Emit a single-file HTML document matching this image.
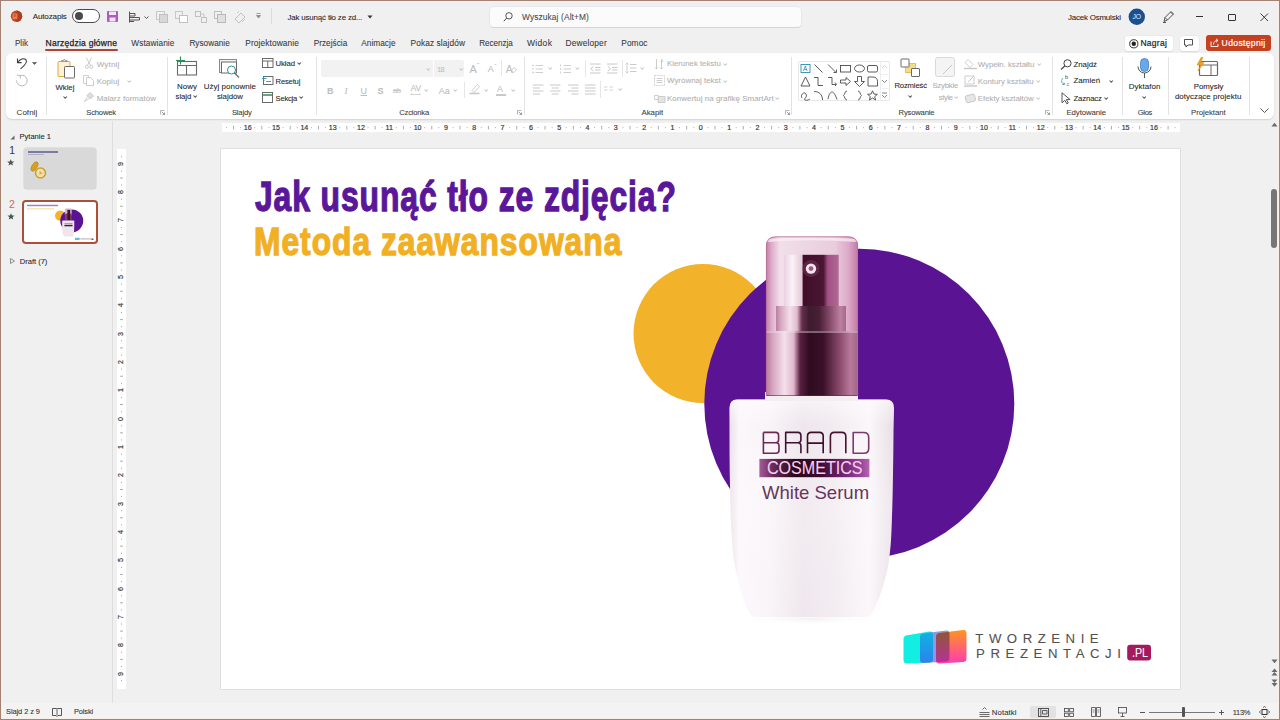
<!DOCTYPE html>
<html><head><meta charset="utf-8">
<style>
*{margin:0;padding:0;box-sizing:border-box}
html,body{width:1280px;height:720px;overflow:hidden}
body{background:#f0f0f0;font-family:"Liberation Sans",sans-serif;color:#262626;position:relative}
.a{position:absolute;white-space:nowrap}
div.a{-webkit-text-stroke:0.08px currentColor}
svg.a{overflow:visible}
</style></head><body>

<svg class="a" style="left:9px;top:9px;" width="15" height="15" viewBox="0 0 15 15" fill="none"><circle cx="7.5" cy="7.3" r="5.7" fill="#c14a28"/><path d="M7.5 1.6A5.7 5.7 0 0 1 7.5 13" fill="#b03c1e"/><rect x="3.6" y="4.6" width="4.8" height="5.4" rx="0.6" fill="#e88a60" opacity="0.85"/><rect x="4.8" y="5.6" width="2.4" height="2" fill="#c14a28" opacity="0.7"/></svg>
<div class="a" style="left:32.70px;top:13.00px;font-size:8.04px;line-height:8.04px;color:#262626;letter-spacing:-0.135px;">Autozapis</div>
<div class="a" style="left:72px;top:9px;width:28px;height:14px;border:1px solid #4a4a4a;border-radius:7px;background:#fff"></div>
<div class="a" style="left:74.5px;top:11.8px;width:8.5px;height:8.5px;border-radius:50%;background:#4a4a4a"></div>
<svg class="a" style="left:106px;top:10px;" width="13" height="13" viewBox="0 0 13 13" fill="none"><rect x="1" y="1" width="11" height="11" rx="1" fill="#b455c8"/><rect x="3" y="1.5" width="7" height="3.5" fill="#f3e6f7"/><rect x="3.5" y="7.5" width="6" height="4" fill="#f3e6f7"/></svg>
<svg class="a" style="left:128px;top:11px;" width="22" height="12" viewBox="0 0 22 12" fill="none"><path d="M1.5 0.5v11M2 2.5h5v2.5H2M2 6.5h9.5v2.5H2M2 10.5h4" stroke="#555" stroke-width="1"/><path d="M16.5 5.5l2 2 2-2" stroke="#555" stroke-width="1"/></svg>
<svg class="a" style="left:156px;top:11px;" width="12" height="12" viewBox="0 0 12 12" fill="none"><rect x="0.5" y="0.5" width="8" height="8" stroke="#c8c8c8"/><rect x="3.5" y="3.5" width="8" height="8" fill="#d8d8d8" stroke="#c0c0c0"/></svg>
<svg class="a" style="left:175px;top:11px;" width="13" height="12" viewBox="0 0 13 12" fill="none"><rect x="0.5" y="0.5" width="7" height="7" stroke="#c8c8c8"/><rect x="4.5" y="4.5" width="8" height="7" fill="#fff" stroke="#c0c0c0"/></svg>
<svg class="a" style="left:195px;top:11px;" width="12" height="12" viewBox="0 0 12 12" fill="none"><rect x="0.5" y="0.5" width="5" height="5" stroke="#c0c0c0"/><rect x="6.5" y="6.5" width="5" height="5" stroke="#c0c0c0"/><path d="M6 3h3v3" stroke="#c8c8c8"/></svg>
<svg class="a" style="left:214px;top:11px;" width="12" height="12" viewBox="0 0 12 12" fill="none"><rect x="0.5" y="0.5" width="7" height="7" stroke="#c0c0c0"/><rect x="3.5" y="3.5" width="8" height="8" fill="#e0e0e0" stroke="#b8b8b8"/></svg>
<svg class="a" style="left:234px;top:11px;" width="12" height="12" viewBox="0 0 12 12" fill="none"><path d="M1 8l6-6 4 4-6 6z" stroke="#c0c0c0"/><path d="M3 2l2-1.5M8 11l3-3" stroke="#c8c8c8"/></svg>
<svg class="a" style="left:256px;top:13px;" width="5" height="6" viewBox="0 0 5 6" fill="none"><path d="M0.5 0.5h4M0.5 2.5h4l-2 2.5z" stroke="#888" fill="#888" stroke-width="0.8"/></svg>
<div class="a" style="left:271px;top:8px;width:1px;height:16px;background:#dcdcdc"></div>
<div class="a" style="left:287.40px;top:14.00px;font-size:7.95px;line-height:7.95px;color:#262626;letter-spacing:-0.167px;">Jak usunąć tło ze zd...</div>
<svg class="a" style="left:367px;top:15px;" width="6" height="4" viewBox="0 0 6 4" fill="none"><path d="M0.5 0.5h5l-2.5 3z" fill="#333"/></svg>
<div class="a" style="left:489.5px;top:6.5px;width:311.5px;height:20.5px;background:#fbfbfb;border-radius:4px;box-shadow:0 0 0 0.6px #e2e2e2,0 1px 0 0 #c9c9c9"></div>
<svg class="a" style="left:503px;top:12px;" width="10" height="10" viewBox="0 0 10 10" fill="none"><circle cx="6" cy="3.8" r="3.2" stroke="#444" stroke-width="0.9"/><path d="M3.6 6.2L0.8 9.2" stroke="#444" stroke-width="1"/></svg>
<div class="a" style="left:522.00px;top:13.00px;font-size:8.36px;line-height:8.36px;color:#4a4a4a;letter-spacing:0.122px;">Wyszukaj (Alt+M)</div>
<div class="a" style="left:1068.00px;top:14.00px;font-size:7.95px;line-height:7.95px;color:#262626;letter-spacing:-0.203px;">Jacek Osmulski</div>
<svg class="a" style="left:1128px;top:8px;" width="18" height="18" viewBox="0 0 18 18" fill="none"><circle cx="8.8" cy="8.7" r="8.2" fill="#1c4f8f"/><text x="8.8" y="11" font-size="6.8" text-anchor="middle" fill="#e8eef8" font-family="Liberation Sans">JO</text></svg>
<svg class="a" style="left:1162px;top:10px;" width="13" height="13" viewBox="0 0 13 13" fill="none"><path d="M2 11.5l1-4 6-6 2.5 2.5-6 6z M3 7.5l2.5 2.5 M8.5 2l2.5 2.5" stroke="#444" stroke-width="0.9" fill="none"/><path d="M1 12.5h3" stroke="#444" stroke-width="0.9"/></svg>
<div class="a" style="left:1195.5px;top:16px;width:7.5px;height:1px;background:#333"></div>
<div class="a" style="left:1228px;top:13.5px;width:7.5px;height:7.5px;border:1px solid #333;border-radius:1px"></div>
<svg class="a" style="left:1259.5px;top:13px;" width="8.5" height="8.5" viewBox="0 0 8.5 8.5" fill="none"><path d="M0.5 0.5l7.5 7.5M8 0.5L0.5 8" stroke="#333" stroke-width="0.95"/></svg>
<div class="a" style="left:15.00px;top:40.00px;font-size:8.14px;line-height:8.14px;color:#3a3a3a;letter-spacing:-0.049px;">Plik</div>
<div class="a" style="left:131.30px;top:39.00px;font-size:8.29px;line-height:8.29px;color:#3a3a3a;letter-spacing:0.077px;">Wstawianie</div>
<div class="a" style="left:189.40px;top:40.00px;font-size:8.22px;line-height:8.22px;color:#3a3a3a;letter-spacing:0.015px;">Rysowanie</div>
<div class="a" style="left:245.30px;top:39.00px;font-size:8.34px;line-height:8.34px;color:#3a3a3a;letter-spacing:0.110px;">Projektowanie</div>
<div class="a" style="left:313.70px;top:40.00px;font-size:8.23px;line-height:8.23px;color:#3a3a3a;letter-spacing:0.023px;">Przejścia</div>
<div class="a" style="left:361.25px;top:40.00px;font-size:8.25px;line-height:8.25px;color:#3a3a3a;letter-spacing:0.043px;">Animacje</div>
<div class="a" style="left:410.50px;top:39.00px;font-size:8.33px;line-height:8.33px;color:#3a3a3a;letter-spacing:0.103px;">Pokaz slajdów</div>
<div class="a" style="left:479.25px;top:40.00px;font-size:8.15px;line-height:8.15px;color:#3a3a3a;letter-spacing:-0.042px;">Recenzja</div>
<div class="a" style="left:527.00px;top:39.00px;font-size:8.51px;line-height:8.51px;color:#3a3a3a;letter-spacing:0.324px;">Widok</div>
<div class="a" style="left:565.50px;top:39.00px;font-size:8.37px;line-height:8.37px;color:#3a3a3a;letter-spacing:0.154px;">Deweloper</div>
<div class="a" style="left:621.25px;top:39.00px;font-size:8.30px;line-height:8.30px;color:#3a3a3a;letter-spacing:0.112px;">Pomoc</div>
<div class="a" style="left:45.50px;top:39.00px;font-size:8.52px;line-height:8.52px;color:#1e1e1e;letter-spacing:0.252px;-webkit-text-stroke:0.25px #1e1e1e;">Narzędzia główne</div>
<div class="a" style="left:45px;top:49px;width:73px;height:2px;background:#a4493a;border-radius:1px"></div>
<div class="a" style="left:1125px;top:35.5px;width:47.5px;height:15px;background:#fff;border-radius:3px;box-shadow:0 0 0 0.5px #e6e6e6,0 0.8px 1.2px rgba(0,0,0,.12)"></div>
<svg class="a" style="left:1128.5px;top:38.5px;" width="10" height="10" viewBox="0 0 10 10" fill="none"><circle cx="4.8" cy="4.8" r="4.1" stroke="#222" stroke-width="0.9"/><circle cx="4.8" cy="4.8" r="2.2" fill="#222"/></svg>
<div class="a" style="left:1140.40px;top:39.00px;font-size:8.51px;line-height:8.51px;color:#1e1e1e;letter-spacing:0.270px;-webkit-text-stroke:0.2px #1e1e1e;">Nagraj</div>
<div class="a" style="left:1179.5px;top:35.5px;width:19px;height:15px;background:#fff;border-radius:3px;box-shadow:0 0 0 0.5px #e6e6e6,0 0.8px 1.2px rgba(0,0,0,.12)"></div>
<svg class="a" style="left:1184px;top:38.5px;" width="9" height="9" viewBox="0 0 9 9" fill="none"><path d="M0.5 0.5h8v5.5h-4.5l-2 2v-2H0.5z" stroke="#333" stroke-width="0.85"/></svg>
<div class="a" style="left:1205.5px;top:35px;width:65.5px;height:15.5px;background:#c4401f;border-radius:3px"></div>
<svg class="a" style="left:1210px;top:38px;" width="9" height="9" viewBox="0 0 9 9" fill="none"><path d="M1 3.5v5h7V6" stroke="#fff" stroke-width="0.9"/><path d="M3.5 6.5c0-3 2-4 4-4M6 0.8l2 1.7-2 1.8" stroke="#fff" stroke-width="0.9"/></svg>
<div class="a" style="left:1221.60px;top:39.00px;font-size:8.62px;line-height:8.62px;color:#fff;letter-spacing:0.330px;-webkit-text-stroke:0.2px #fff;">Udostępnij</div>
<div class="a" style="left:5.5px;top:52.5px;width:1268.5px;height:66px;background:#fff;border-radius:6px;box-shadow:0 1px 1.5px rgba(0,0,0,.13)"></div>
<div class="a" style="left:45.5px;top:57px;width:1px;height:58px;background:#e3e3e3"></div>
<div class="a" style="left:166.5px;top:57px;width:1px;height:58px;background:#e3e3e3"></div>
<div class="a" style="left:315.5px;top:57px;width:1px;height:58px;background:#e3e3e3"></div>
<div class="a" style="left:523.5px;top:57px;width:1px;height:58px;background:#e3e3e3"></div>
<div class="a" style="left:791px;top:57px;width:1px;height:58px;background:#e3e3e3"></div>
<div class="a" style="left:1051.5px;top:57px;width:1px;height:58px;background:#e3e3e3"></div>
<div class="a" style="left:1121.5px;top:57px;width:1px;height:58px;background:#e3e3e3"></div>
<div class="a" style="left:1167.5px;top:57px;width:1px;height:58px;background:#e3e3e3"></div>
<div class="a" style="left:1248.5px;top:57px;width:1px;height:58px;background:#e3e3e3"></div>
<div class="a" style="left:16.60px;top:109.00px;font-size:7.94px;line-height:7.94px;color:#404040;letter-spacing:0.065px;">Cofnij</div>
<div class="a" style="left:86.30px;top:109.00px;font-size:7.65px;line-height:7.65px;color:#404040;letter-spacing:-0.201px;">Schowek</div>
<div class="a" style="left:231.90px;top:109.00px;font-size:7.65px;line-height:7.65px;color:#404040;letter-spacing:-0.167px;">Slajdy</div>
<div class="a" style="left:399.20px;top:109.00px;font-size:7.64px;line-height:7.64px;color:#404040;letter-spacing:-0.189px;">Czcionka</div>
<div class="a" style="left:641.40px;top:109.00px;font-size:7.86px;line-height:7.86px;color:#404040;letter-spacing:0.009px;">Akapit</div>
<div class="a" style="left:898.60px;top:109.00px;font-size:7.65px;line-height:7.65px;color:#404040;letter-spacing:-0.186px;">Rysowanie</div>
<div class="a" style="left:1066.50px;top:109.00px;font-size:7.77px;line-height:7.77px;color:#404040;letter-spacing:-0.072px;">Edytowanie</div>
<div class="a" style="left:1137.70px;top:109.00px;font-size:7.57px;line-height:7.57px;color:#404040;letter-spacing:-0.286px;">Głos</div>
<div class="a" style="left:1191.00px;top:109.00px;font-size:7.79px;line-height:7.79px;color:#404040;letter-spacing:-0.044px;">Projektant</div>
<svg class="a" style="left:160px;top:110px;" width="5" height="5" viewBox="0 0 5 5" fill="none"><path d="M0.5 4.5V0.5h4" stroke="#999" stroke-width="0.7"/><path d="M1.8 1.8l2.7 2.7M4.5 2.5v2h-2" stroke="#777" stroke-width="0.7"/></svg>
<svg class="a" style="left:517px;top:110px;" width="5" height="5" viewBox="0 0 5 5" fill="none"><path d="M0.5 4.5V0.5h4" stroke="#999" stroke-width="0.7"/><path d="M1.8 1.8l2.7 2.7M4.5 2.5v2h-2" stroke="#777" stroke-width="0.7"/></svg>
<svg class="a" style="left:784.5px;top:110px;" width="5" height="5" viewBox="0 0 5 5" fill="none"><path d="M0.5 4.5V0.5h4" stroke="#999" stroke-width="0.7"/><path d="M1.8 1.8l2.7 2.7M4.5 2.5v2h-2" stroke="#777" stroke-width="0.7"/></svg>
<svg class="a" style="left:1045px;top:110px;" width="5" height="5" viewBox="0 0 5 5" fill="none"><path d="M0.5 4.5V0.5h4" stroke="#999" stroke-width="0.7"/><path d="M1.8 1.8l2.7 2.7M4.5 2.5v2h-2" stroke="#777" stroke-width="0.7"/></svg>
<svg class="a" style="left:15px;top:56px;" width="14" height="14" viewBox="0 0 14 14" fill="none"><path d="M2.5 2.6V6.6H6.6" stroke="#404040" stroke-width="1.1"/><path d="M2.8 6.3C5 3 9 1.6 11 3.9 12.6 5.8 11.4 8 5.6 12.9" stroke="#404040" stroke-width="1.1"/></svg>
<svg class="a" style="left:32px;top:62px;" width="5" height="3.5" viewBox="0 0 5 3.5" fill="none"><path d="M0.5 0.5l2 2 2-2z" fill="#555" stroke="#555" stroke-width="0.6"/></svg>
<svg class="a" style="left:15px;top:73px;" width="14" height="14" viewBox="0 0 14 14" fill="none"><path d="M2 2.3H5.3V5.6" stroke="#b8b8b8" stroke-width="1"/><path d="M5 2.6A5.3 5.3 0 1 1 1.6 7.4" stroke="#b8b8b8" stroke-width="1"/></svg>
<svg class="a" style="left:57px;top:58px;" width="20" height="21" viewBox="0 0 20 21" fill="none"><rect x="1" y="3.5" width="12" height="15" rx="1" fill="#fdf3d6" stroke="#e2a83a" stroke-width="1"/><path d="M4.5 3.5V2.5h2l0.8-1.5 0.8 1.5h2v1z" fill="#fff" stroke="#8a8a8a" stroke-width="0.8"/><rect x="7.5" y="8.5" width="10" height="11.5" rx="0.8" fill="#fff" stroke="#6a6a6a" stroke-width="1"/></svg>
<div class="a" style="left:55.50px;top:84.00px;font-size:7.80px;line-height:7.80px;color:#262626;letter-spacing:-0.044px;">Wklej</div>
<svg class="a" style="left:62.8px;top:95.7px;" width="4.4" height="2.8" viewBox="0 0 4.4 2.8" fill="none"><path d="M0.5 0.5l1.7 1.8 1.7-1.8" stroke="#555" stroke-width="1.05"/></svg>
<svg class="a" style="left:85px;top:57px;" width="8" height="12" viewBox="0 0 8 12" fill="none"><circle cx="1.8" cy="9.8" r="1.6" stroke="#c0c0c0" stroke-width="0.8"/><circle cx="6.2" cy="9.8" r="1.6" stroke="#c0c0c0" stroke-width="0.8"/><path d="M2.5 8.3L6.8 0.5M5.5 8.3L1.2 0.5" stroke="#c0c0c0" stroke-width="0.8"/></svg>
<div class="a" style="left:96.70px;top:61.00px;font-size:8.04px;line-height:8.04px;color:#b0b0b0;letter-spacing:0.154px;">Wytnij</div>
<svg class="a" style="left:83px;top:75px;" width="11" height="11" viewBox="0 0 11 11" fill="none"><path d="M0.5 0.5h5v8h-5z" stroke="#c4c4c4" stroke-width="0.8"/><path d="M3.5 2.5h4l3 3v5h-7z" fill="#fff" stroke="#c0c0c0" stroke-width="0.8"/></svg>
<div class="a" style="left:96.70px;top:78.00px;font-size:7.96px;line-height:7.96px;color:#b0b0b0;letter-spacing:0.093px;">Kopiuj</div>
<svg class="a" style="left:127.3px;top:79.5px;" width="4.4" height="2.8" viewBox="0 0 4.4 2.8" fill="none"><path d="M0.5 0.5l1.7 1.8 1.7-1.8" stroke="#c8c8c8" stroke-width="1.05"/></svg>
<svg class="a" style="left:84px;top:92px;" width="10" height="10" viewBox="0 0 10 10" fill="none"><path d="M6 0.5l3.5 3.5-3 3-3.5-3.5z" fill="#ddd" stroke="#c0c0c0" stroke-width="0.8"/><path d="M3.5 4.5L0.5 9.5 5.5 6.5" stroke="#c0c0c0" stroke-width="0.8"/></svg>
<div class="a" style="left:96.70px;top:95.00px;font-size:7.92px;line-height:7.92px;color:#b0b0b0;letter-spacing:0.054px;">Malarz formatów</div>
<svg class="a" style="left:175px;top:56px;" width="23" height="21" viewBox="0 0 23 21" fill="none"><rect x="2.5" y="5.5" width="19" height="13.5" fill="#fff" stroke="#6a6a6a" stroke-width="1.1"/><path d="M2.5 9.5h19M11.5 9.5v9.5" stroke="#6a6a6a" stroke-width="1.1"/><path d="M5.5 0.5v8M1 4.5h9" stroke="#2e8b57" stroke-width="1.1"/></svg>
<div class="a" style="left:176.90px;top:83.00px;font-size:7.91px;line-height:7.91px;color:#262626;letter-spacing:0.075px;">Nowy</div>
<div class="a" style="left:175.60px;top:93.00px;font-size:7.76px;line-height:7.76px;color:#262626;letter-spacing:-0.072px;">slajd</div>
<svg class="a" style="left:192.8px;top:95.2px;" width="4.4" height="2.8" viewBox="0 0 4.4 2.8" fill="none"><path d="M0.5 0.5l1.7 1.8 1.7-1.8" stroke="#555" stroke-width="1.05"/></svg>
<svg class="a" style="left:219px;top:59px;" width="22" height="20" viewBox="0 0 22 20" fill="none"><rect x="0.5" y="0.5" width="17" height="13" fill="#f3f3f3" stroke="#8a8a8a" stroke-width="1"/><rect x="2.5" y="3" width="15" height="11" fill="#fff" stroke="#6a6a6a" stroke-width="1"/><circle cx="12.5" cy="11" r="4" fill="#fff" stroke="#2e8fa8" stroke-width="1"/><path d="M15.5 14l4.5 4.5" stroke="#6a6a6a" stroke-width="1.2"/></svg>
<div class="a" style="left:203.75px;top:83.00px;font-size:7.92px;line-height:7.92px;color:#262626;letter-spacing:0.059px;">Użyj ponownie</div>
<div class="a" style="left:216.90px;top:93.00px;font-size:7.85px;line-height:7.85px;color:#262626;letter-spacing:-0.002px;">slajdów</div>
<svg class="a" style="left:261.5px;top:58px;" width="11.5" height="10" viewBox="0 0 11.5 10" fill="none"><rect x="0.5" y="0.5" width="10.5" height="9" fill="#fff" stroke="#6a6a6a" stroke-width="1"/><path d="M0.5 3h10.5M5.75 3v6.5" stroke="#6a6a6a" stroke-width="1"/></svg>
<div class="a" style="left:275.60px;top:60.00px;font-size:7.75px;line-height:7.75px;color:#262626;letter-spacing:-0.099px;">Układ</div>
<svg class="a" style="left:297.3px;top:62.2px;" width="4.4" height="2.8" viewBox="0 0 4.4 2.8" fill="none"><path d="M0.5 0.5l1.7 1.8 1.7-1.8" stroke="#555" stroke-width="1.05"/></svg>
<svg class="a" style="left:261.5px;top:75px;" width="11.5" height="10" viewBox="0 0 11.5 10" fill="none"><rect x="1.5" y="1.5" width="9.5" height="8" fill="#fff" stroke="#6a6a6a" stroke-width="1"/><path d="M0.5 3.5h4M2.5 1.5l-2 2 2 2" stroke="#2e8fa8" stroke-width="0.9"/><path d="M4 6.5h5" stroke="#6a6a6a" stroke-width="0.8"/></svg>
<div class="a" style="left:275.60px;top:78.00px;font-size:7.64px;line-height:7.64px;color:#262626;letter-spacing:-0.181px;">Resetuj</div>
<svg class="a" style="left:261.5px;top:92px;" width="11" height="11" viewBox="0 0 11 11" fill="none"><rect x="0.5" y="0.5" width="10" height="10" fill="#fff" stroke="#6a6a6a" stroke-width="1"/><path d="M0.5 3h10" stroke="#2e8b57" stroke-width="1.5"/></svg>
<div class="a" style="left:275.60px;top:95.00px;font-size:7.59px;line-height:7.59px;color:#262626;letter-spacing:-0.233px;">Sekcja</div>
<svg class="a" style="left:299.3px;top:96.2px;" width="4.4" height="2.8" viewBox="0 0 4.4 2.8" fill="none"><path d="M0.5 0.5l1.7 1.8 1.7-1.8" stroke="#555" stroke-width="1.05"/></svg>
<div class="a" style="left:321px;top:59.5px;width:111.5px;height:17.5px;background:#f2f2f2;border-radius:2px 0 0 2px"></div>
<svg class="a" style="left:426.2px;top:67.7px;" width="4.4" height="2.8" viewBox="0 0 4.4 2.8" fill="none"><path d="M0.5 0.5l1.7 1.8 1.7-1.8" stroke="#c8c8c8" stroke-width="1.05"/></svg>
<div class="a" style="left:434.3px;top:59.5px;width:30.2px;height:17.5px;background:#f2f2f2;border-radius:0 2px 2px 0"></div>
<div class="a" style="left:437.00px;top:66.00px;font-size:7.48px;line-height:7.48px;color:#c0c0c0;letter-spacing:-0.608px;">18</div>
<svg class="a" style="left:458.5px;top:67.7px;" width="4.4" height="2.8" viewBox="0 0 4.4 2.8" fill="none"><path d="M0.5 0.5l1.7 1.8 1.7-1.8" stroke="#c8c8c8" stroke-width="1.05"/></svg>
<div class="a" style="left:469.50px;top:64.00px;font-size:11.00px;line-height:11.00px;color:#bdbdbd;">A</div>
<div class="a" style="left:477.00px;top:62.00px;font-size:7.00px;line-height:7.00px;color:#bdbdbd;">ˆ</div>
<div class="a" style="left:487.70px;top:65.00px;font-size:9.00px;line-height:9.00px;color:#bdbdbd;">A</div>
<div class="a" style="left:494.50px;top:63.00px;font-size:6.00px;line-height:6.00px;color:#bdbdbd;">ˇ</div>
<div class="a" style="left:501px;top:60px;width:1px;height:16px;background:#e6e6e6"></div>
<div class="a" style="left:505.70px;top:64.00px;font-size:10.50px;line-height:10.50px;color:#bdbdbd;">A</div>
<svg class="a" style="left:510px;top:66px;" width="7" height="7" viewBox="0 0 7 7" fill="none"><path d="M1 5l3-3.5 2.5 2L4 6.5z" stroke="#c0c0c0" stroke-width="0.8"/></svg>
<div class="a" style="left:327.00px;top:87.00px;font-size:9.00px;line-height:9.00px;color:#bdbdbd;font-weight:bold;">B</div>
<div class="a" style="left:344.50px;top:87.00px;font-size:9.00px;line-height:9.00px;color:#bdbdbd;font-style:italic;font-family:Liberation Serif;">I</div>
<div class="a" style="left:360.50px;top:87.00px;font-size:9.00px;line-height:9.00px;color:#bdbdbd;text-decoration:underline;">U</div>
<div class="a" style="left:377.50px;top:87.00px;font-size:9.00px;line-height:9.00px;color:#bdbdbd;font-weight:bold;">S</div>
<div class="a" style="left:393.00px;top:87.00px;font-size:7.50px;line-height:7.50px;color:#c4c4c4;text-decoration:line-through;letter-spacing:-0.3px">ab</div>
<div class="a" style="left:410.40px;top:84.00px;font-size:8.50px;line-height:8.50px;color:#bdbdbd;">AV</div>
<svg class="a" style="left:410px;top:92.5px;" width="11" height="3" viewBox="0 0 11 3" fill="none"><path d="M0.5 1.5h10M0.5 1.5l1.5-1M10.5 1.5L9 0.5" stroke="#c4c4c4" stroke-width="0.7"/></svg>
<svg class="a" style="left:424.3px;top:88.7px;" width="4.4" height="2.8" viewBox="0 0 4.4 2.8" fill="none"><path d="M0.5 0.5l1.7 1.8 1.7-1.8" stroke="#c8c8c8" stroke-width="1.05"/></svg>
<div class="a" style="left:438.70px;top:87.00px;font-size:9.00px;line-height:9.00px;color:#bdbdbd;">Aa</div>
<svg class="a" style="left:452.8px;top:88.7px;" width="4.4" height="2.8" viewBox="0 0 4.4 2.8" fill="none"><path d="M0.5 0.5l1.7 1.8 1.7-1.8" stroke="#c8c8c8" stroke-width="1.05"/></svg>
<div class="a" style="left:464px;top:82px;width:1px;height:16px;background:#e6e6e6"></div>
<svg class="a" style="left:468.5px;top:83px;" width="11" height="12" viewBox="0 0 11 12" fill="none"><path d="M3 7.5l5.5-6 2 2-5.5 6z" stroke="#c0c0c0" stroke-width="0.8"/><path d="M0.5 10.5h10" stroke="#c8c8c8" stroke-width="1.6"/></svg>
<svg class="a" style="left:483.8px;top:88.7px;" width="4.4" height="2.8" viewBox="0 0 4.4 2.8" fill="none"><path d="M0.5 0.5l1.7 1.8 1.7-1.8" stroke="#c8c8c8" stroke-width="1.05"/></svg>
<div class="a" style="left:497.00px;top:85.00px;font-size:9.00px;line-height:9.00px;color:#bdbdbd;">A</div>
<div class="a" style="left:496px;top:94px;width:10px;height:1.6px;background:#c8c8c8"></div>
<svg class="a" style="left:511.40000000000003px;top:88.7px;" width="4.4" height="2.8" viewBox="0 0 4.4 2.8" fill="none"><path d="M0.5 0.5l1.7 1.8 1.7-1.8" stroke="#c8c8c8" stroke-width="1.05"/></svg>
<svg class="a" style="left:532px;top:63.5px;" width="11" height="10" viewBox="0 0 11 10" fill="none"><circle cx="1" cy="1.5" r="0.8" fill="#c2c2c2"/><path d="M3.5 1.5h7.5" stroke="#c2c2c2" stroke-width="0.8"/><circle cx="1" cy="5.0" r="0.8" fill="#c2c2c2"/><path d="M3.5 5.0h7.5" stroke="#c2c2c2" stroke-width="0.8"/><circle cx="1" cy="8.5" r="0.8" fill="#c2c2c2"/><path d="M3.5 8.5h7.5" stroke="#c2c2c2" stroke-width="0.8"/></svg>
<svg class="a" style="left:547.8px;top:67.2px;" width="4.4" height="2.8" viewBox="0 0 4.4 2.8" fill="none"><path d="M0.5 0.5l1.7 1.8 1.7-1.8" stroke="#c8c8c8" stroke-width="1.05"/></svg>
<svg class="a" style="left:559.5px;top:63.5px;" width="11" height="10" viewBox="0 0 11 10" fill="none"><path d="M0.5 0.5v2" stroke="#c2c2c2" stroke-width="0.7"/><path d="M3.5 1.5h7.5" stroke="#c2c2c2" stroke-width="0.8"/><path d="M0.5 4.0v2" stroke="#c2c2c2" stroke-width="0.7"/><path d="M3.5 5.0h7.5" stroke="#c2c2c2" stroke-width="0.8"/><path d="M0.5 7.5v2" stroke="#c2c2c2" stroke-width="0.7"/><path d="M3.5 8.5h7.5" stroke="#c2c2c2" stroke-width="0.8"/></svg>
<svg class="a" style="left:575.3px;top:67.2px;" width="4.4" height="2.8" viewBox="0 0 4.4 2.8" fill="none"><path d="M0.5 0.5l1.7 1.8 1.7-1.8" stroke="#c8c8c8" stroke-width="1.05"/></svg>
<div class="a" style="left:584.5px;top:60px;width:1px;height:17px;background:#e6e6e6"></div>
<svg class="a" style="left:589.5px;top:63px;" width="11" height="11" viewBox="0 0 11 11" fill="none"><path d="M0 1h10.5M5 4.5h5.5M5 7h5.5M0 10h10.5M3.5 3.5L0.8 5.8 3.5 8" stroke="#c2c2c2" stroke-width="0.9"/></svg>
<svg class="a" style="left:606.5px;top:63px;" width="11" height="11" viewBox="0 0 11 11" fill="none"><path d="M0 1h10.5M5 4.5h5.5M5 7h5.5M0 10h10.5M0.8 3.5L3.5 5.8 0.8 8" stroke="#c2c2c2" stroke-width="0.9"/></svg>
<div class="a" style="left:621.5px;top:60px;width:1px;height:17px;background:#e6e6e6"></div>
<svg class="a" style="left:625px;top:62px;" width="12" height="12" viewBox="0 0 12 12" fill="none"><path d="M2 1v10M0.5 2.5L2 1l1.5 1.5M0.5 9.5L2 11l1.5-1.5" stroke="#c4c4c4" stroke-width="0.8"/><path d="M5 2.5h6.5M5 6h6.5M5 9.5h6.5" stroke="#c4c4c4" stroke-width="0.9"/></svg>
<svg class="a" style="left:639.8px;top:67.2px;" width="4.4" height="2.8" viewBox="0 0 4.4 2.8" fill="none"><path d="M0.5 0.5l1.7 1.8 1.7-1.8" stroke="#c8c8c8" stroke-width="1.05"/></svg>
<svg class="a" style="left:532.7px;top:84px;" width="10.5" height="11" viewBox="0 0 10.5 11" fill="none"><path d="M0 1h10.5" stroke="#c2c2c2" stroke-width="0.9"/><path d="M0 4h7" stroke="#c2c2c2" stroke-width="0.9"/><path d="M0 7h10.5" stroke="#c2c2c2" stroke-width="0.9"/><path d="M0 10h7" stroke="#c2c2c2" stroke-width="0.9"/></svg>
<svg class="a" style="left:550px;top:84px;" width="10.5" height="11" viewBox="0 0 10.5 11" fill="none"><path d="M0.0 1h10.5" stroke="#c2c2c2" stroke-width="0.9"/><path d="M1.75 4h7" stroke="#c2c2c2" stroke-width="0.9"/><path d="M0.0 7h10.5" stroke="#c2c2c2" stroke-width="0.9"/><path d="M1.75 10h7" stroke="#c2c2c2" stroke-width="0.9"/></svg>
<svg class="a" style="left:568px;top:84px;" width="10.5" height="11" viewBox="0 0 10.5 11" fill="none"><path d="M0.0 1h10.5" stroke="#c2c2c2" stroke-width="0.9"/><path d="M3.5 4h7" stroke="#c2c2c2" stroke-width="0.9"/><path d="M0.0 7h10.5" stroke="#c2c2c2" stroke-width="0.9"/><path d="M3.5 10h7" stroke="#c2c2c2" stroke-width="0.9"/></svg>
<svg class="a" style="left:584.5px;top:84px;" width="10.5" height="11" viewBox="0 0 10.5 11" fill="none"><path d="M0 1h10.5" stroke="#c2c2c2" stroke-width="0.9"/><path d="M0 4h10.5" stroke="#c2c2c2" stroke-width="0.9"/><path d="M0 7h10.5" stroke="#c2c2c2" stroke-width="0.9"/><path d="M0 10h10.5" stroke="#c2c2c2" stroke-width="0.9"/></svg>
<div class="a" style="left:599.5px;top:81px;width:1px;height:17px;background:#e6e6e6"></div>
<svg class="a" style="left:604px;top:86px;" width="9" height="6" viewBox="0 0 9 6" fill="none"><path d="M0 1h3.5M5.5 1H9M0 4h3.5M5.5 4H9" stroke="#c8c8c8" stroke-width="0.8"/></svg>
<svg class="a" style="left:617.8px;top:88.2px;" width="4.4" height="2.8" viewBox="0 0 4.4 2.8" fill="none"><path d="M0.5 0.5l1.7 1.8 1.7-1.8" stroke="#c8c8c8" stroke-width="1.05"/></svg>
<svg class="a" style="left:653.5px;top:57.5px;" width="11" height="12" viewBox="0 0 11 12" fill="none"><path d="M2.5 1v10M1 9.5l1.5 1.5 1.5-1.5M7.5 3v8M6 9.5l1.5 1.5 1.5-1.5" stroke="#c0c0c0" stroke-width="0.8"/><text x="6.5" y="4" font-size="4" fill="#c0c0c0">A</text></svg>
<div class="a" style="left:667.00px;top:60.00px;font-size:7.83px;line-height:7.83px;color:#b0b0b0;letter-spacing:-0.014px;">Kierunek tekstu</div>
<svg class="a" style="left:723.3px;top:63.2px;" width="4.4" height="2.8" viewBox="0 0 4.4 2.8" fill="none"><path d="M0.5 0.5l1.7 1.8 1.7-1.8" stroke="#c8c8c8" stroke-width="1.05"/></svg>
<svg class="a" style="left:653.5px;top:75px;" width="11" height="11" viewBox="0 0 11 11" fill="none"><rect x="0.5" y="0.5" width="10" height="10" stroke="#c4c4c4" stroke-width="0.8" stroke-dasharray="2 1"/><path d="M2.5 3.5h6M2.5 5.5h6M2.5 7.5h6" stroke="#c4c4c4" stroke-width="0.8"/></svg>
<div class="a" style="left:667.00px;top:77.00px;font-size:7.89px;line-height:7.89px;color:#b0b0b0;letter-spacing:0.030px;">Wyrównaj tekst</div>
<svg class="a" style="left:723.3px;top:79.7px;" width="4.4" height="2.8" viewBox="0 0 4.4 2.8" fill="none"><path d="M0.5 0.5l1.7 1.8 1.7-1.8" stroke="#c8c8c8" stroke-width="1.05"/></svg>
<svg class="a" style="left:653.5px;top:93px;" width="12" height="10" viewBox="0 0 12 10" fill="none"><path d="M0.5 2.5h4v4h-4z" stroke="#c4c4c4" stroke-width="0.8"/><path d="M4 3.5h7v6H4z" fill="#e4e4e4" stroke="#c4c4c4" stroke-width="0.8"/></svg>
<div class="a" style="left:667.00px;top:95.00px;font-size:7.91px;line-height:7.91px;color:#b0b0b0;letter-spacing:0.045px;">Konwertuj na grafikę SmartArt</div>
<svg class="a" style="left:775.3px;top:97.2px;" width="4.4" height="2.8" viewBox="0 0 4.4 2.8" fill="none"><path d="M0.5 0.5l1.7 1.8 1.7-1.8" stroke="#c8c8c8" stroke-width="1.05"/></svg>
<div class="a" style="left:798px;top:61px;width:91.5px;height:40px;border:1px solid #e8e8e8;border-radius:2px;background:#fff"></div>
<div class="a" style="left:879.5px;top:61px;width:10px;height:40px;border-left:1px solid #eee"></div>
<div class="a" style="left:880px;top:74px;width:9.5px;height:1px;background:#eee"></div>
<div class="a" style="left:880px;top:87.5px;width:9.5px;height:1px;background:#eee"></div>
<svg class="a" style="left:881px;top:65px;" width="7" height="4" viewBox="0 0 7 4" fill="none"><path d="M1 3l2.5-2.5L6 3" stroke="#ccc" stroke-width="0.8"/></svg>
<svg class="a" style="left:881px;top:79px;" width="7" height="4" viewBox="0 0 7 4" fill="none"><path d="M1 1l2.5 2.5L6 1" stroke="#666" stroke-width="0.8"/></svg>
<svg class="a" style="left:881px;top:91.5px;" width="7" height="6" viewBox="0 0 7 6" fill="none"><path d="M1 1h5M1 3l2.5 2.5L6 3" stroke="#666" stroke-width="0.8"/></svg>
<svg class="a" style="left:799.5px;top:62.5px;" width="11" height="11" viewBox="0 0 11 11" fill="none"><rect x="1" y="1.5" width="9" height="8" stroke="#2e8fa8" stroke-width="0.9"/><text x="3" y="8" font-size="6.5" fill="#2e6fa8" font-family="Liberation Sans">A</text></svg>
<svg class="a" style="left:813px;top:62.5px;" width="11" height="11" viewBox="0 0 11 11" fill="none"><path d="M1.5 1.5l8 8" stroke="#4a4a4a" stroke-width="0.9"/></svg>
<svg class="a" style="left:826.5px;top:62.5px;" width="11" height="11" viewBox="0 0 11 11" fill="none"><path d="M1 1.5l8 8M9.5 6.5v3h-3" stroke="#4a4a4a" stroke-width="0.9"/></svg>
<svg class="a" style="left:840px;top:62.5px;" width="11" height="11" viewBox="0 0 11 11" fill="none"><rect x="0.5" y="2.5" width="10" height="6.5" stroke="#4a4a4a" stroke-width="0.9"/></svg>
<svg class="a" style="left:853.5px;top:62.5px;" width="11" height="11" viewBox="0 0 11 11" fill="none"><ellipse cx="5.5" cy="5.5" rx="5" ry="3.5" stroke="#4a4a4a" stroke-width="0.9"/></svg>
<svg class="a" style="left:867px;top:62.5px;" width="11" height="11" viewBox="0 0 11 11" fill="none"><rect x="0.5" y="2.5" width="10" height="6.5" rx="1.5" stroke="#4a4a4a" stroke-width="0.9"/></svg>
<svg class="a" style="left:799.5px;top:76px;" width="11" height="11" viewBox="0 0 11 11" fill="none"><path d="M5.5 1L10 10H1z" stroke="#4a4a4a" stroke-width="0.9"/></svg>
<svg class="a" style="left:813px;top:76px;" width="11" height="11" viewBox="0 0 11 11" fill="none"><path d="M1 1.5h4v8h5" stroke="#4a4a4a" stroke-width="0.9"/></svg>
<svg class="a" style="left:826.5px;top:76px;" width="11" height="11" viewBox="0 0 11 11" fill="none"><path d="M1 1.5h4v7h4M8 6.5l1.5 2-1.5 1.5" stroke="#4a4a4a" stroke-width="0.9"/></svg>
<svg class="a" style="left:840px;top:76px;" width="11" height="11" viewBox="0 0 11 11" fill="none"><path d="M0.5 4h5.5V1.5l4.5 4-4.5 4V7H0.5z" stroke="#4a4a4a" stroke-width="0.9"/></svg>
<svg class="a" style="left:853.5px;top:76px;" width="11" height="11" viewBox="0 0 11 11" fill="none"><path d="M3.5 0.5h4v5h3l-5 5-5-5h3z" stroke="#4a4a4a" stroke-width="0.9"/></svg>
<svg class="a" style="left:867px;top:76px;" width="11" height="11" viewBox="0 0 11 11" fill="none"><path d="M1 1h5c3 0 4.5 2 4.5 4.5v4.5H1z" stroke="#4a4a4a" stroke-width="0.9"/></svg>
<svg class="a" style="left:799.5px;top:89.5px;" width="11" height="11" viewBox="0 0 11 11" fill="none"><path d="M2 8c-2-3 2-7 4-4s-3 5-1 6 5-1 5-1" stroke="#4a4a4a" stroke-width="0.9"/></svg>
<svg class="a" style="left:813px;top:89.5px;" width="11" height="11" viewBox="0 0 11 11" fill="none"><path d="M1 1.5c5 0 8.5 3 8.5 8.5" stroke="#4a4a4a" stroke-width="0.9"/></svg>
<svg class="a" style="left:826.5px;top:89.5px;" width="11" height="11" viewBox="0 0 11 11" fill="none"><path d="M1 9c1-5 2.5-7 4-7s3 2 5 7.5" stroke="#4a4a4a" stroke-width="0.9"/></svg>
<svg class="a" style="left:840px;top:89.5px;" width="11" height="11" viewBox="0 0 11 11" fill="none"><path d="M7 1C4.5 1 5 5 3.5 5.5 5 6 4.5 10 7 10" stroke="#4a4a4a" stroke-width="0.9"/></svg>
<svg class="a" style="left:853.5px;top:89.5px;" width="11" height="11" viewBox="0 0 11 11" fill="none"><path d="M4 1c2.5 0 2 4 3.5 4.5C6 6 6.5 10 4 10" stroke="#4a4a4a" stroke-width="0.9"/></svg>
<svg class="a" style="left:867px;top:89.5px;" width="11" height="11" viewBox="0 0 11 11" fill="none"><path d="M5.5 0.8l1.4 3.2 3.5.3-2.7 2.3.9 3.4-3.1-1.9-3.1 1.9.9-3.4L0.6 4.3l3.5-.3z" stroke="#4a4a4a" stroke-width="0.9"/></svg>
<svg class="a" style="left:900px;top:57.5px;" width="21" height="20" viewBox="0 0 21 20" fill="none"><rect x="5.5" y="5.5" width="10" height="9" fill="#f7d98a" stroke="#e2b24a" stroke-width="0.8"/><rect x="1" y="1" width="8" height="8" rx="0.5" fill="#fff" stroke="#6a6a6a" stroke-width="1"/><rect x="11.5" y="10.5" width="8" height="8" rx="0.5" fill="#fff" stroke="#6a6a6a" stroke-width="1"/></svg>
<div class="a" style="left:894.40px;top:82.00px;font-size:7.69px;line-height:7.69px;color:#262626;letter-spacing:-0.151px;">Rozmieść</div>
<svg class="a" style="left:908.3px;top:95.2px;" width="4.4" height="2.8" viewBox="0 0 4.4 2.8" fill="none"><path d="M0.5 0.5l1.7 1.8 1.7-1.8" stroke="#555" stroke-width="1.05"/></svg>
<svg class="a" style="left:935px;top:57px;" width="21" height="21" viewBox="0 0 21 21" fill="none"><rect x="0.5" y="0.5" width="19" height="19" rx="2" fill="#f4f4f4" stroke="#d0d0d0" stroke-width="0.8"/><path d="M8 17l9-9M11 14l6-6" stroke="#c4c4c4" stroke-width="0.9"/></svg>
<div class="a" style="left:932.40px;top:82.00px;font-size:7.68px;line-height:7.68px;color:#b0b0b0;letter-spacing:-0.148px;">Szybkie</div>
<div class="a" style="left:938.70px;top:94.00px;font-size:7.49px;line-height:7.49px;color:#b0b0b0;letter-spacing:-0.275px;">style</div>
<svg class="a" style="left:953.8px;top:95.7px;" width="4.4" height="2.8" viewBox="0 0 4.4 2.8" fill="none"><path d="M0.5 0.5l1.7 1.8 1.7-1.8" stroke="#c8c8c8" stroke-width="1.05"/></svg>
<svg class="a" style="left:963.5px;top:58px;" width="13" height="11" viewBox="0 0 13 11" fill="none"><path d="M4 1.5l5 5-3 3-5-5z" stroke="#c0c0c0" stroke-width="0.8"/><path d="M0 10.5h13" stroke="#c8c8c8" stroke-width="1.4"/></svg>
<div class="a" style="left:977.80px;top:61.00px;font-size:7.82px;line-height:7.82px;color:#b0b0b0;letter-spacing:-0.023px;">Wypełn. kształtu</div>
<svg class="a" style="left:1036.8px;top:63.2px;" width="4.4" height="2.8" viewBox="0 0 4.4 2.8" fill="none"><path d="M0.5 0.5l1.7 1.8 1.7-1.8" stroke="#c8c8c8" stroke-width="1.05"/></svg>
<svg class="a" style="left:963.5px;top:75px;" width="13" height="12" viewBox="0 0 13 12" fill="none"><rect x="1" y="1" width="9" height="8" stroke="#c0c0c0" stroke-width="0.8"/><path d="M4 7l5-5" stroke="#c0c0c0" stroke-width="0.9"/><path d="M0 11h13" stroke="#c8c8c8" stroke-width="1.4"/></svg>
<div class="a" style="left:977.80px;top:78.00px;font-size:7.85px;line-height:7.85px;color:#b0b0b0;letter-spacing:0.002px;">Kontury kształtu</div>
<svg class="a" style="left:1036.3px;top:79.7px;" width="4.4" height="2.8" viewBox="0 0 4.4 2.8" fill="none"><path d="M0.5 0.5l1.7 1.8 1.7-1.8" stroke="#c8c8c8" stroke-width="1.05"/></svg>
<svg class="a" style="left:963.5px;top:93px;" width="13" height="10" viewBox="0 0 13 10" fill="none"><rect x="1.5" y="2" width="9.5" height="7" rx="1.5" fill="#e6e6e6" stroke="#c0c0c0" stroke-width="0.8" transform="rotate(-15 6 5)"/></svg>
<div class="a" style="left:977.80px;top:95.00px;font-size:7.83px;line-height:7.83px;color:#b0b0b0;letter-spacing:-0.015px;">Efekty kształtów</div>
<svg class="a" style="left:1036.3px;top:96.7px;" width="4.4" height="2.8" viewBox="0 0 4.4 2.8" fill="none"><path d="M0.5 0.5l1.7 1.8 1.7-1.8" stroke="#c8c8c8" stroke-width="1.05"/></svg>
<svg class="a" style="left:1059.5px;top:58.5px;" width="12" height="11" viewBox="0 0 12 11" fill="none"><circle cx="7.5" cy="4.3" r="3.6" stroke="#444" stroke-width="1"/><path d="M4.8 7L1 10.5" stroke="#444" stroke-width="1.1"/></svg>
<div class="a" style="left:1073.40px;top:61.00px;font-size:7.86px;line-height:7.86px;color:#262626;letter-spacing:0.006px;">Znajdź</div>
<svg class="a" style="left:1059.5px;top:74px;" width="12" height="13" viewBox="0 0 12 13" fill="none"><text x="5" y="5" font-size="5.5" fill="#444" font-family="Liberation Sans">b</text><text x="6.5" y="12" font-size="5.5" fill="#2e8fa8" font-family="Liberation Sans">c</text><path d="M3 4c-2 2-2 5 1 6.5M2.5 10.5l2 0-0.5-2" stroke="#2e8fa8" stroke-width="0.8"/></svg>
<div class="a" style="left:1073.40px;top:77.00px;font-size:7.94px;line-height:7.94px;color:#262626;letter-spacing:0.086px;">Zamień</div>
<svg class="a" style="left:1108.5px;top:79.7px;" width="4.4" height="2.8" viewBox="0 0 4.4 2.8" fill="none"><path d="M0.5 0.5l1.7 1.8 1.7-1.8" stroke="#555" stroke-width="1.05"/></svg>
<svg class="a" style="left:1061px;top:92px;" width="10" height="12" viewBox="0 0 10 12" fill="none"><path d="M1 0.8v10l2.8-2.5 2 3.5 1.5-0.8-2-3.4h3.8z" stroke="#444" stroke-width="0.9" fill="#fff"/></svg>
<div class="a" style="left:1073.40px;top:95.00px;font-size:7.74px;line-height:7.74px;color:#262626;letter-spacing:-0.107px;">Zaznacz</div>
<svg class="a" style="left:1103.8px;top:97.2px;" width="4.4" height="2.8" viewBox="0 0 4.4 2.8" fill="none"><path d="M0.5 0.5l1.7 1.8 1.7-1.8" stroke="#555" stroke-width="1.05"/></svg>
<svg class="a" style="left:1137px;top:57.5px;" width="15" height="21" viewBox="0 0 15 21" fill="none"><rect x="3.5" y="0.5" width="8" height="13" rx="4" fill="#6aa8e8" stroke="#3f7fc8" stroke-width="0.8"/><path d="M1 8.5a6.5 6.5 0 0 0 13 0M7.5 15v5" stroke="#555" stroke-width="1"/></svg>
<div class="a" style="left:1128.70px;top:83.00px;font-size:7.93px;line-height:7.93px;color:#262626;letter-spacing:0.071px;">Dyktafon</div>
<svg class="a" style="left:1142.1px;top:95.7px;" width="4.4" height="2.8" viewBox="0 0 4.4 2.8" fill="none"><path d="M0.5 0.5l1.7 1.8 1.7-1.8" stroke="#555" stroke-width="1.05"/></svg>
<svg class="a" style="left:1196px;top:56.5px;" width="23" height="20" viewBox="0 0 23 20" fill="none"><rect x="3.5" y="4.5" width="18" height="14" rx="1" fill="#fff" stroke="#6a6a6a" stroke-width="1.2"/><path d="M3.5 8h18M15 8v10.5" stroke="#6a6a6a" stroke-width="1"/><path d="M5 0.5L1 8h3.5L2 14 8 5.5H4.5L7 0.5z" fill="#f0a020" stroke="#d88a10" stroke-width="0.5"/></svg>
<div class="a" style="left:1193.80px;top:83.00px;font-size:7.84px;line-height:7.84px;color:#262626;letter-spacing:-0.007px;">Pomysły</div>
<div class="a" style="left:1174.90px;top:93.00px;font-size:7.90px;line-height:7.90px;color:#262626;letter-spacing:0.036px;">dotyczące projektu</div>
<svg class="a" style="left:1260px;top:107.5px;" width="9" height="5" viewBox="0 0 9 5" fill="none"><path d="M0.5 0.5l4 4 4-4" stroke="#444" stroke-width="0.9"/></svg>
<div class="a" style="left:0px;top:0px;width:1280px;height:720px;border:1px solid #a48272;z-index:40;pointer-events:none"></div>
<div class="a" style="left:1px;top:1px;width:1278px;height:718px;border:1px solid #fbefe8;z-index:40;pointer-events:none;opacity:.85"></div>
<div class="a" style="left:112px;top:121px;width:1px;height:582px;background:#dedede"></div>
<div class="a" style="left:2px;top:703px;width:1276px;height:15px;background:#f3f3f3"></div>
<svg class="a" style="left:9.5px;top:134.5px;" width="5" height="5" viewBox="0 0 5 5" fill="none"><path d="M4.5 0.5v4h-4z" fill="#666"/></svg>
<div class="a" style="left:19.50px;top:133.00px;font-size:7.58px;line-height:7.58px;color:#262626;letter-spacing:-0.014px;">Pytanie 1</div>
<div class="a" style="left:9.20px;top:146.00px;font-size:10.20px;line-height:10.20px;color:#3a3a3a;">1</div>
<svg class="a" style="left:7px;top:158.5px;" width="7.5" height="6.5" viewBox="0 0 7.5 6.5" fill="none"><path d="M3.75 0.2l1 2.2 2.5.2-1.9 1.6.6 2.4-2.2-1.3-2.2 1.3.6-2.4L0.2 2.6l2.5-.2z" fill="#555"/></svg>
<div class="a" style="left:24.2px;top:148.2px;width:71.6px;height:40.5px;background:#d9d9d9;border-radius:3px;box-shadow:0 0 0 0.5px #cfcfcf"></div>
<div class="a" style="left:27.5px;top:151.4px;width:30px;height:1.2px;background:#3a3a80;opacity:.6"></div>
<div class="a" style="left:27.5px;top:154.3px;width:16.5px;height:1.1px;background:#7a7ab8;opacity:.45"></div>
<svg class="a" style="left:28px;top:158px;" width="21" height="21" viewBox="0 0 21 21" fill="none"><ellipse cx="6.5" cy="8.5" rx="2.6" ry="5.2" fill="#d8a020" stroke="#b08010" stroke-width="0.6" transform="rotate(30 6.5 8.5)"/><circle cx="12.5" cy="15" r="5" fill="#efe2a8" stroke="#c9a030" stroke-width="1.5"/><path d="M11.5 13l3 2-3 2z" fill="#c9a030" opacity="0.8"/></svg>
<div class="a" style="left:8.90px;top:199.00px;font-size:10.50px;line-height:10.50px;color:#c9735e;">2</div>
<svg class="a" style="left:6.5px;top:212.5px;" width="8" height="6.5" viewBox="0 0 8 6.5" fill="none"><path d="M4 0.2l1 2.2 2.5.2-1.9 1.6.6 2.4-2.2-1.3-2.2 1.3.6-2.4L0.5 2.6l2.5-.2z" fill="#3d5a55"/></svg>
<div class="a" style="left:22px;top:199.8px;width:76px;height:44.2px;border:2px solid #a9503c;border-radius:4px;background:#fff"></div>
<svg class="a" style="left:24px;top:202px;" width="72" height="40" viewBox="221 149 959 540" fill="none"><rect x="254" y="186" width="420" height="20" fill="#5a1a8e" opacity="0.55"/>
<rect x="255" y="232" width="366" height="18" fill="#f0b330" opacity="0.4"/>
<circle cx="703" cy="333.5" r="69.5" fill="#f2b32a"/><circle cx="859.3" cy="403.7" r="155" fill="#5a1393"/>
<rect x="766" y="236" width="92" height="95" rx="6" fill="#dcb4cc"/><rect x="766" y="306" width="92" height="91" fill="#7a4262"/><rect x="800" y="255" width="38" height="140" fill="#3e1430"/>
<path d="M737 399.5 H886 Q894 399.5 894 408 L893.5 430 Q893 500 891 540 Q880 600 871 615 H756 Q742 600 732 540 Q729.5 500 729.5 430 L729.5 408 Q729.5 399.5 737 399.5Z" fill="#eee6ec"/>
<rect x="760" y="459" width="110" height="18" fill="#4a1838"/><rect x="761" y="432" width="108" height="21" fill="#8a6a80" opacity="0.6"/>
<rect x="903" y="631" width="63" height="32" rx="4" fill="#40b8d8" opacity="0.85"/><rect x="975" y="634" width="175" height="24" fill="#999" opacity="0.45"/><rect x="1127" y="645" width="24" height="16" fill="#a5195e"/></svg>
<svg class="a" style="left:10px;top:258px;" width="5" height="6" viewBox="0 0 5 6" fill="none"><path d="M0.5 0.5l4 2.5-4 2.5z" stroke="#777" stroke-width="0.8"/></svg>
<div class="a" style="left:19.80px;top:258.00px;font-size:7.57px;line-height:7.57px;color:#262626;letter-spacing:-0.019px;">Draft (7)</div>
<div class="a" style="left:222px;top:122.5px;width:958px;height:9px;background:#fff"></div>
<div class="a" style="left:116.5px;top:149px;width:9.5px;height:540px;background:#fff"></div>
<div class="a" style="left:243.74px;top:125.00px;font-size:7.10px;line-height:7.10px;color:#3c3c3c;-webkit-text-stroke:0.2px #3c3c3c;">16</div>
<div class="a" style="left:272.06px;top:125.00px;font-size:7.10px;line-height:7.10px;color:#3c3c3c;-webkit-text-stroke:0.2px #3c3c3c;">15</div>
<div class="a" style="left:300.38px;top:125.00px;font-size:7.10px;line-height:7.10px;color:#3c3c3c;-webkit-text-stroke:0.2px #3c3c3c;">14</div>
<div class="a" style="left:328.70px;top:125.00px;font-size:7.10px;line-height:7.10px;color:#3c3c3c;-webkit-text-stroke:0.2px #3c3c3c;">13</div>
<div class="a" style="left:357.02px;top:125.00px;font-size:7.10px;line-height:7.10px;color:#3c3c3c;-webkit-text-stroke:0.2px #3c3c3c;">12</div>
<div class="a" style="left:385.59px;top:125.00px;font-size:7.10px;line-height:7.10px;color:#3c3c3c;-webkit-text-stroke:0.2px #3c3c3c;">11</div>
<div class="a" style="left:413.66px;top:125.00px;font-size:7.10px;line-height:7.10px;color:#3c3c3c;-webkit-text-stroke:0.2px #3c3c3c;">10</div>
<div class="a" style="left:443.95px;top:125.00px;font-size:7.10px;line-height:7.10px;color:#3c3c3c;-webkit-text-stroke:0.2px #3c3c3c;">9</div>
<div class="a" style="left:472.27px;top:125.00px;font-size:7.10px;line-height:7.10px;color:#3c3c3c;-webkit-text-stroke:0.2px #3c3c3c;">8</div>
<div class="a" style="left:500.59px;top:125.00px;font-size:7.10px;line-height:7.10px;color:#3c3c3c;-webkit-text-stroke:0.2px #3c3c3c;">7</div>
<div class="a" style="left:528.91px;top:125.00px;font-size:7.10px;line-height:7.10px;color:#3c3c3c;-webkit-text-stroke:0.2px #3c3c3c;">6</div>
<div class="a" style="left:557.23px;top:125.00px;font-size:7.10px;line-height:7.10px;color:#3c3c3c;-webkit-text-stroke:0.2px #3c3c3c;">5</div>
<div class="a" style="left:585.55px;top:125.00px;font-size:7.10px;line-height:7.10px;color:#3c3c3c;-webkit-text-stroke:0.2px #3c3c3c;">4</div>
<div class="a" style="left:613.87px;top:125.00px;font-size:7.10px;line-height:7.10px;color:#3c3c3c;-webkit-text-stroke:0.2px #3c3c3c;">3</div>
<div class="a" style="left:642.19px;top:125.00px;font-size:7.10px;line-height:7.10px;color:#3c3c3c;-webkit-text-stroke:0.2px #3c3c3c;">2</div>
<div class="a" style="left:670.51px;top:125.00px;font-size:7.10px;line-height:7.10px;color:#3c3c3c;-webkit-text-stroke:0.2px #3c3c3c;">1</div>
<div class="a" style="left:698.83px;top:125.00px;font-size:7.10px;line-height:7.10px;color:#3c3c3c;-webkit-text-stroke:0.2px #3c3c3c;">0</div>
<div class="a" style="left:727.15px;top:125.00px;font-size:7.10px;line-height:7.10px;color:#3c3c3c;-webkit-text-stroke:0.2px #3c3c3c;">1</div>
<div class="a" style="left:755.47px;top:125.00px;font-size:7.10px;line-height:7.10px;color:#3c3c3c;-webkit-text-stroke:0.2px #3c3c3c;">2</div>
<div class="a" style="left:783.79px;top:125.00px;font-size:7.10px;line-height:7.10px;color:#3c3c3c;-webkit-text-stroke:0.2px #3c3c3c;">3</div>
<div class="a" style="left:812.11px;top:125.00px;font-size:7.10px;line-height:7.10px;color:#3c3c3c;-webkit-text-stroke:0.2px #3c3c3c;">4</div>
<div class="a" style="left:840.43px;top:125.00px;font-size:7.10px;line-height:7.10px;color:#3c3c3c;-webkit-text-stroke:0.2px #3c3c3c;">5</div>
<div class="a" style="left:868.75px;top:125.00px;font-size:7.10px;line-height:7.10px;color:#3c3c3c;-webkit-text-stroke:0.2px #3c3c3c;">6</div>
<div class="a" style="left:897.07px;top:125.00px;font-size:7.10px;line-height:7.10px;color:#3c3c3c;-webkit-text-stroke:0.2px #3c3c3c;">7</div>
<div class="a" style="left:925.39px;top:125.00px;font-size:7.10px;line-height:7.10px;color:#3c3c3c;-webkit-text-stroke:0.2px #3c3c3c;">8</div>
<div class="a" style="left:953.71px;top:125.00px;font-size:7.10px;line-height:7.10px;color:#3c3c3c;-webkit-text-stroke:0.2px #3c3c3c;">9</div>
<div class="a" style="left:980.06px;top:125.00px;font-size:7.10px;line-height:7.10px;color:#3c3c3c;-webkit-text-stroke:0.2px #3c3c3c;">10</div>
<div class="a" style="left:1008.63px;top:125.00px;font-size:7.10px;line-height:7.10px;color:#3c3c3c;-webkit-text-stroke:0.2px #3c3c3c;">11</div>
<div class="a" style="left:1036.70px;top:125.00px;font-size:7.10px;line-height:7.10px;color:#3c3c3c;-webkit-text-stroke:0.2px #3c3c3c;">12</div>
<div class="a" style="left:1065.02px;top:125.00px;font-size:7.10px;line-height:7.10px;color:#3c3c3c;-webkit-text-stroke:0.2px #3c3c3c;">13</div>
<div class="a" style="left:1093.34px;top:125.00px;font-size:7.10px;line-height:7.10px;color:#3c3c3c;-webkit-text-stroke:0.2px #3c3c3c;">14</div>
<div class="a" style="left:1121.66px;top:125.00px;font-size:7.10px;line-height:7.10px;color:#3c3c3c;-webkit-text-stroke:0.2px #3c3c3c;">15</div>
<div class="a" style="left:1149.98px;top:125.00px;font-size:7.10px;line-height:7.10px;color:#3c3c3c;-webkit-text-stroke:0.2px #3c3c3c;">16</div>
<svg class="a" style="left:222px;top:122.5px;" width="958" height="9" viewBox="0 0 958 9" fill="none"><path d="M4.44 4.25v0.90" stroke="#8a8a8a" stroke-width="0.8"/><path d="M11.52 2.90v3.60" stroke="#8a8a8a" stroke-width="0.7"/><path d="M18.60 4.25v0.90" stroke="#8a8a8a" stroke-width="0.8"/><path d="M32.76 4.25v0.90" stroke="#8a8a8a" stroke-width="0.8"/><path d="M39.84 2.90v3.60" stroke="#8a8a8a" stroke-width="0.7"/><path d="M46.92 4.25v0.90" stroke="#8a8a8a" stroke-width="0.8"/><path d="M61.08 4.25v0.90" stroke="#8a8a8a" stroke-width="0.8"/><path d="M68.16 2.90v3.60" stroke="#8a8a8a" stroke-width="0.7"/><path d="M75.24 4.25v0.90" stroke="#8a8a8a" stroke-width="0.8"/><path d="M89.40 4.25v0.90" stroke="#8a8a8a" stroke-width="0.8"/><path d="M96.48 2.90v3.60" stroke="#8a8a8a" stroke-width="0.7"/><path d="M103.56 4.25v0.90" stroke="#8a8a8a" stroke-width="0.8"/><path d="M117.72 4.25v0.90" stroke="#8a8a8a" stroke-width="0.8"/><path d="M124.80 2.90v3.60" stroke="#8a8a8a" stroke-width="0.7"/><path d="M131.88 4.25v0.90" stroke="#8a8a8a" stroke-width="0.8"/><path d="M146.04 4.25v0.90" stroke="#8a8a8a" stroke-width="0.8"/><path d="M153.12 2.90v3.60" stroke="#8a8a8a" stroke-width="0.7"/><path d="M160.20 4.25v0.90" stroke="#8a8a8a" stroke-width="0.8"/><path d="M174.36 4.25v0.90" stroke="#8a8a8a" stroke-width="0.8"/><path d="M181.44 2.90v3.60" stroke="#8a8a8a" stroke-width="0.7"/><path d="M188.52 4.25v0.90" stroke="#8a8a8a" stroke-width="0.8"/><path d="M202.68 4.25v0.90" stroke="#8a8a8a" stroke-width="0.8"/><path d="M209.76 2.90v3.60" stroke="#8a8a8a" stroke-width="0.7"/><path d="M216.84 4.25v0.90" stroke="#8a8a8a" stroke-width="0.8"/><path d="M231.00 4.25v0.90" stroke="#8a8a8a" stroke-width="0.8"/><path d="M238.08 2.90v3.60" stroke="#8a8a8a" stroke-width="0.7"/><path d="M245.16 4.25v0.90" stroke="#8a8a8a" stroke-width="0.8"/><path d="M259.32 4.25v0.90" stroke="#8a8a8a" stroke-width="0.8"/><path d="M266.40 2.90v3.60" stroke="#8a8a8a" stroke-width="0.7"/><path d="M273.48 4.25v0.90" stroke="#8a8a8a" stroke-width="0.8"/><path d="M287.64 4.25v0.90" stroke="#8a8a8a" stroke-width="0.8"/><path d="M294.72 2.90v3.60" stroke="#8a8a8a" stroke-width="0.7"/><path d="M301.80 4.25v0.90" stroke="#8a8a8a" stroke-width="0.8"/><path d="M315.96 4.25v0.90" stroke="#8a8a8a" stroke-width="0.8"/><path d="M323.04 2.90v3.60" stroke="#8a8a8a" stroke-width="0.7"/><path d="M330.12 4.25v0.90" stroke="#8a8a8a" stroke-width="0.8"/><path d="M344.28 4.25v0.90" stroke="#8a8a8a" stroke-width="0.8"/><path d="M351.36 2.90v3.60" stroke="#8a8a8a" stroke-width="0.7"/><path d="M358.44 4.25v0.90" stroke="#8a8a8a" stroke-width="0.8"/><path d="M372.60 4.25v0.90" stroke="#8a8a8a" stroke-width="0.8"/><path d="M379.68 2.90v3.60" stroke="#8a8a8a" stroke-width="0.7"/><path d="M386.76 4.25v0.90" stroke="#8a8a8a" stroke-width="0.8"/><path d="M400.92 4.25v0.90" stroke="#8a8a8a" stroke-width="0.8"/><path d="M408.00 2.90v3.60" stroke="#8a8a8a" stroke-width="0.7"/><path d="M415.08 4.25v0.90" stroke="#8a8a8a" stroke-width="0.8"/><path d="M429.24 4.25v0.90" stroke="#8a8a8a" stroke-width="0.8"/><path d="M436.32 2.90v3.60" stroke="#8a8a8a" stroke-width="0.7"/><path d="M443.40 4.25v0.90" stroke="#8a8a8a" stroke-width="0.8"/><path d="M457.56 4.25v0.90" stroke="#8a8a8a" stroke-width="0.8"/><path d="M464.64 2.90v3.60" stroke="#8a8a8a" stroke-width="0.7"/><path d="M471.72 4.25v0.90" stroke="#8a8a8a" stroke-width="0.8"/><path d="M485.88 4.25v0.90" stroke="#8a8a8a" stroke-width="0.8"/><path d="M492.96 2.90v3.60" stroke="#8a8a8a" stroke-width="0.7"/><path d="M500.04 4.25v0.90" stroke="#8a8a8a" stroke-width="0.8"/><path d="M514.20 4.25v0.90" stroke="#8a8a8a" stroke-width="0.8"/><path d="M521.28 2.90v3.60" stroke="#8a8a8a" stroke-width="0.7"/><path d="M528.36 4.25v0.90" stroke="#8a8a8a" stroke-width="0.8"/><path d="M542.52 4.25v0.90" stroke="#8a8a8a" stroke-width="0.8"/><path d="M549.60 2.90v3.60" stroke="#8a8a8a" stroke-width="0.7"/><path d="M556.68 4.25v0.90" stroke="#8a8a8a" stroke-width="0.8"/><path d="M570.84 4.25v0.90" stroke="#8a8a8a" stroke-width="0.8"/><path d="M577.92 2.90v3.60" stroke="#8a8a8a" stroke-width="0.7"/><path d="M585.00 4.25v0.90" stroke="#8a8a8a" stroke-width="0.8"/><path d="M599.16 4.25v0.90" stroke="#8a8a8a" stroke-width="0.8"/><path d="M606.24 2.90v3.60" stroke="#8a8a8a" stroke-width="0.7"/><path d="M613.32 4.25v0.90" stroke="#8a8a8a" stroke-width="0.8"/><path d="M627.48 4.25v0.90" stroke="#8a8a8a" stroke-width="0.8"/><path d="M634.56 2.90v3.60" stroke="#8a8a8a" stroke-width="0.7"/><path d="M641.64 4.25v0.90" stroke="#8a8a8a" stroke-width="0.8"/><path d="M655.80 4.25v0.90" stroke="#8a8a8a" stroke-width="0.8"/><path d="M662.88 2.90v3.60" stroke="#8a8a8a" stroke-width="0.7"/><path d="M669.96 4.25v0.90" stroke="#8a8a8a" stroke-width="0.8"/><path d="M684.12 4.25v0.90" stroke="#8a8a8a" stroke-width="0.8"/><path d="M691.20 2.90v3.60" stroke="#8a8a8a" stroke-width="0.7"/><path d="M698.28 4.25v0.90" stroke="#8a8a8a" stroke-width="0.8"/><path d="M712.44 4.25v0.90" stroke="#8a8a8a" stroke-width="0.8"/><path d="M719.52 2.90v3.60" stroke="#8a8a8a" stroke-width="0.7"/><path d="M726.60 4.25v0.90" stroke="#8a8a8a" stroke-width="0.8"/><path d="M740.76 4.25v0.90" stroke="#8a8a8a" stroke-width="0.8"/><path d="M747.84 2.90v3.60" stroke="#8a8a8a" stroke-width="0.7"/><path d="M754.92 4.25v0.90" stroke="#8a8a8a" stroke-width="0.8"/><path d="M769.08 4.25v0.90" stroke="#8a8a8a" stroke-width="0.8"/><path d="M776.16 2.90v3.60" stroke="#8a8a8a" stroke-width="0.7"/><path d="M783.24 4.25v0.90" stroke="#8a8a8a" stroke-width="0.8"/><path d="M797.40 4.25v0.90" stroke="#8a8a8a" stroke-width="0.8"/><path d="M804.48 2.90v3.60" stroke="#8a8a8a" stroke-width="0.7"/><path d="M811.56 4.25v0.90" stroke="#8a8a8a" stroke-width="0.8"/><path d="M825.72 4.25v0.90" stroke="#8a8a8a" stroke-width="0.8"/><path d="M832.80 2.90v3.60" stroke="#8a8a8a" stroke-width="0.7"/><path d="M839.88 4.25v0.90" stroke="#8a8a8a" stroke-width="0.8"/><path d="M854.04 4.25v0.90" stroke="#8a8a8a" stroke-width="0.8"/><path d="M861.12 2.90v3.60" stroke="#8a8a8a" stroke-width="0.7"/><path d="M868.20 4.25v0.90" stroke="#8a8a8a" stroke-width="0.8"/><path d="M882.36 4.25v0.90" stroke="#8a8a8a" stroke-width="0.8"/><path d="M889.44 2.90v3.60" stroke="#8a8a8a" stroke-width="0.7"/><path d="M896.52 4.25v0.90" stroke="#8a8a8a" stroke-width="0.8"/><path d="M910.68 4.25v0.90" stroke="#8a8a8a" stroke-width="0.8"/><path d="M917.76 2.90v3.60" stroke="#8a8a8a" stroke-width="0.7"/><path d="M924.84 4.25v0.90" stroke="#8a8a8a" stroke-width="0.8"/><path d="M939.00 4.25v0.90" stroke="#8a8a8a" stroke-width="0.8"/><path d="M946.08 2.90v3.60" stroke="#8a8a8a" stroke-width="0.7"/><path d="M953.16 4.25v0.90" stroke="#8a8a8a" stroke-width="0.8"/></svg>
<div class="a" style="left:111.20px;top:153.82px;width:20px;height:20px;line-height:20px;text-align:center;font-size:7.1px;color:#3c3c3c;-webkit-text-stroke:0.2px #3c3c3c;transform:rotate(-90deg)">9</div>
<div class="a" style="left:111.20px;top:182.14px;width:20px;height:20px;line-height:20px;text-align:center;font-size:7.1px;color:#3c3c3c;-webkit-text-stroke:0.2px #3c3c3c;transform:rotate(-90deg)">8</div>
<div class="a" style="left:111.20px;top:210.46px;width:20px;height:20px;line-height:20px;text-align:center;font-size:7.1px;color:#3c3c3c;-webkit-text-stroke:0.2px #3c3c3c;transform:rotate(-90deg)">7</div>
<div class="a" style="left:111.20px;top:238.78px;width:20px;height:20px;line-height:20px;text-align:center;font-size:7.1px;color:#3c3c3c;-webkit-text-stroke:0.2px #3c3c3c;transform:rotate(-90deg)">6</div>
<div class="a" style="left:111.20px;top:267.10px;width:20px;height:20px;line-height:20px;text-align:center;font-size:7.1px;color:#3c3c3c;-webkit-text-stroke:0.2px #3c3c3c;transform:rotate(-90deg)">5</div>
<div class="a" style="left:111.20px;top:295.42px;width:20px;height:20px;line-height:20px;text-align:center;font-size:7.1px;color:#3c3c3c;-webkit-text-stroke:0.2px #3c3c3c;transform:rotate(-90deg)">4</div>
<div class="a" style="left:111.20px;top:323.74px;width:20px;height:20px;line-height:20px;text-align:center;font-size:7.1px;color:#3c3c3c;-webkit-text-stroke:0.2px #3c3c3c;transform:rotate(-90deg)">3</div>
<div class="a" style="left:111.20px;top:352.06px;width:20px;height:20px;line-height:20px;text-align:center;font-size:7.1px;color:#3c3c3c;-webkit-text-stroke:0.2px #3c3c3c;transform:rotate(-90deg)">2</div>
<div class="a" style="left:111.20px;top:380.38px;width:20px;height:20px;line-height:20px;text-align:center;font-size:7.1px;color:#3c3c3c;-webkit-text-stroke:0.2px #3c3c3c;transform:rotate(-90deg)">1</div>
<div class="a" style="left:111.20px;top:408.70px;width:20px;height:20px;line-height:20px;text-align:center;font-size:7.1px;color:#3c3c3c;-webkit-text-stroke:0.2px #3c3c3c;transform:rotate(-90deg)">0</div>
<div class="a" style="left:111.20px;top:437.02px;width:20px;height:20px;line-height:20px;text-align:center;font-size:7.1px;color:#3c3c3c;-webkit-text-stroke:0.2px #3c3c3c;transform:rotate(-90deg)">1</div>
<div class="a" style="left:111.20px;top:465.34px;width:20px;height:20px;line-height:20px;text-align:center;font-size:7.1px;color:#3c3c3c;-webkit-text-stroke:0.2px #3c3c3c;transform:rotate(-90deg)">2</div>
<div class="a" style="left:111.20px;top:493.66px;width:20px;height:20px;line-height:20px;text-align:center;font-size:7.1px;color:#3c3c3c;-webkit-text-stroke:0.2px #3c3c3c;transform:rotate(-90deg)">3</div>
<div class="a" style="left:111.20px;top:521.98px;width:20px;height:20px;line-height:20px;text-align:center;font-size:7.1px;color:#3c3c3c;-webkit-text-stroke:0.2px #3c3c3c;transform:rotate(-90deg)">4</div>
<div class="a" style="left:111.20px;top:550.30px;width:20px;height:20px;line-height:20px;text-align:center;font-size:7.1px;color:#3c3c3c;-webkit-text-stroke:0.2px #3c3c3c;transform:rotate(-90deg)">5</div>
<div class="a" style="left:111.20px;top:578.62px;width:20px;height:20px;line-height:20px;text-align:center;font-size:7.1px;color:#3c3c3c;-webkit-text-stroke:0.2px #3c3c3c;transform:rotate(-90deg)">6</div>
<div class="a" style="left:111.20px;top:606.94px;width:20px;height:20px;line-height:20px;text-align:center;font-size:7.1px;color:#3c3c3c;-webkit-text-stroke:0.2px #3c3c3c;transform:rotate(-90deg)">7</div>
<div class="a" style="left:111.20px;top:635.26px;width:20px;height:20px;line-height:20px;text-align:center;font-size:7.1px;color:#3c3c3c;-webkit-text-stroke:0.2px #3c3c3c;transform:rotate(-90deg)">8</div>
<div class="a" style="left:111.20px;top:663.58px;width:20px;height:20px;line-height:20px;text-align:center;font-size:7.1px;color:#3c3c3c;-webkit-text-stroke:0.2px #3c3c3c;transform:rotate(-90deg)">9</div>
<svg class="a" style="left:116.8px;top:149px;" width="9" height="540" viewBox="0 0 9 540" fill="none"><path d="M4.00 7.74h1.00" stroke="#8a8a8a" stroke-width="0.8"/><path d="M4.00 21.90h1.00" stroke="#8a8a8a" stroke-width="0.8"/><path d="M3.20 28.98h2.60" stroke="#8a8a8a" stroke-width="0.8"/><path d="M4.00 36.06h1.00" stroke="#8a8a8a" stroke-width="0.8"/><path d="M4.00 50.22h1.00" stroke="#8a8a8a" stroke-width="0.8"/><path d="M3.20 57.30h2.60" stroke="#8a8a8a" stroke-width="0.8"/><path d="M4.00 64.38h1.00" stroke="#8a8a8a" stroke-width="0.8"/><path d="M4.00 78.54h1.00" stroke="#8a8a8a" stroke-width="0.8"/><path d="M3.20 85.62h2.60" stroke="#8a8a8a" stroke-width="0.8"/><path d="M4.00 92.70h1.00" stroke="#8a8a8a" stroke-width="0.8"/><path d="M4.00 106.86h1.00" stroke="#8a8a8a" stroke-width="0.8"/><path d="M3.20 113.94h2.60" stroke="#8a8a8a" stroke-width="0.8"/><path d="M4.00 121.02h1.00" stroke="#8a8a8a" stroke-width="0.8"/><path d="M4.00 135.18h1.00" stroke="#8a8a8a" stroke-width="0.8"/><path d="M3.20 142.26h2.60" stroke="#8a8a8a" stroke-width="0.8"/><path d="M4.00 149.34h1.00" stroke="#8a8a8a" stroke-width="0.8"/><path d="M4.00 163.50h1.00" stroke="#8a8a8a" stroke-width="0.8"/><path d="M3.20 170.58h2.60" stroke="#8a8a8a" stroke-width="0.8"/><path d="M4.00 177.66h1.00" stroke="#8a8a8a" stroke-width="0.8"/><path d="M4.00 191.82h1.00" stroke="#8a8a8a" stroke-width="0.8"/><path d="M3.20 198.90h2.60" stroke="#8a8a8a" stroke-width="0.8"/><path d="M4.00 205.98h1.00" stroke="#8a8a8a" stroke-width="0.8"/><path d="M4.00 220.14h1.00" stroke="#8a8a8a" stroke-width="0.8"/><path d="M3.20 227.22h2.60" stroke="#8a8a8a" stroke-width="0.8"/><path d="M4.00 234.30h1.00" stroke="#8a8a8a" stroke-width="0.8"/><path d="M4.00 248.46h1.00" stroke="#8a8a8a" stroke-width="0.8"/><path d="M3.20 255.54h2.60" stroke="#8a8a8a" stroke-width="0.8"/><path d="M4.00 262.62h1.00" stroke="#8a8a8a" stroke-width="0.8"/><path d="M4.00 276.78h1.00" stroke="#8a8a8a" stroke-width="0.8"/><path d="M3.20 283.86h2.60" stroke="#8a8a8a" stroke-width="0.8"/><path d="M4.00 290.94h1.00" stroke="#8a8a8a" stroke-width="0.8"/><path d="M4.00 305.10h1.00" stroke="#8a8a8a" stroke-width="0.8"/><path d="M3.20 312.18h2.60" stroke="#8a8a8a" stroke-width="0.8"/><path d="M4.00 319.26h1.00" stroke="#8a8a8a" stroke-width="0.8"/><path d="M4.00 333.42h1.00" stroke="#8a8a8a" stroke-width="0.8"/><path d="M3.20 340.50h2.60" stroke="#8a8a8a" stroke-width="0.8"/><path d="M4.00 347.58h1.00" stroke="#8a8a8a" stroke-width="0.8"/><path d="M4.00 361.74h1.00" stroke="#8a8a8a" stroke-width="0.8"/><path d="M3.20 368.82h2.60" stroke="#8a8a8a" stroke-width="0.8"/><path d="M4.00 375.90h1.00" stroke="#8a8a8a" stroke-width="0.8"/><path d="M4.00 390.06h1.00" stroke="#8a8a8a" stroke-width="0.8"/><path d="M3.20 397.14h2.60" stroke="#8a8a8a" stroke-width="0.8"/><path d="M4.00 404.22h1.00" stroke="#8a8a8a" stroke-width="0.8"/><path d="M4.00 418.38h1.00" stroke="#8a8a8a" stroke-width="0.8"/><path d="M3.20 425.46h2.60" stroke="#8a8a8a" stroke-width="0.8"/><path d="M4.00 432.54h1.00" stroke="#8a8a8a" stroke-width="0.8"/><path d="M4.00 446.70h1.00" stroke="#8a8a8a" stroke-width="0.8"/><path d="M3.20 453.78h2.60" stroke="#8a8a8a" stroke-width="0.8"/><path d="M4.00 460.86h1.00" stroke="#8a8a8a" stroke-width="0.8"/><path d="M4.00 475.02h1.00" stroke="#8a8a8a" stroke-width="0.8"/><path d="M3.20 482.10h2.60" stroke="#8a8a8a" stroke-width="0.8"/><path d="M4.00 489.18h1.00" stroke="#8a8a8a" stroke-width="0.8"/><path d="M4.00 503.34h1.00" stroke="#8a8a8a" stroke-width="0.8"/><path d="M3.20 510.42h2.60" stroke="#8a8a8a" stroke-width="0.8"/><path d="M4.00 517.50h1.00" stroke="#8a8a8a" stroke-width="0.8"/><path d="M4.00 531.66h1.00" stroke="#8a8a8a" stroke-width="0.8"/></svg>
<svg class="a" style="left:1270.5px;top:122px;" width="7" height="5" viewBox="0 0 7 5" fill="none"><path d="M0.5 4.5L3.5 0.8 6.5 4.5z" fill="#6a6a6a"/></svg>
<div class="a" style="left:1271px;top:188.5px;width:5.5px;height:59px;background:#767676;border-radius:3px"></div>
<svg class="a" style="left:1270.5px;top:658.5px;" width="7" height="5" viewBox="0 0 7 5" fill="none"><path d="M0.5 0.5h6L3.5 4.2z" fill="#6a6a6a"/></svg>
<svg class="a" style="left:1270.5px;top:667.5px;" width="7" height="8" viewBox="0 0 7 8" fill="none"><path d="M0.5 4L3.5 0.5 6.5 4zM0.5 7.5L3.5 4 6.5 7.5z" fill="#6a6a6a"/></svg>
<svg class="a" style="left:1270.5px;top:678.5px;" width="7" height="8.5" viewBox="0 0 7 8.5" fill="none"><path d="M0.5 0.5h6L3.5 4zM0.5 4h6L3.5 7.8z" fill="#6a6a6a"/></svg>
<div class="a" style="left:6.00px;top:708.00px;font-size:7.47px;line-height:7.47px;color:#333;letter-spacing:-0.090px;">Slajd 2 z 9</div>
<svg class="a" style="left:52px;top:707.5px;" width="10" height="9" viewBox="0 0 10 9" fill="none"><path d="M0.5 0.5h4l0.5 0.5 0.5-0.5h4v7h-3.5l-1 1-1-1H0.5z" stroke="#444" stroke-width="0.9"/><path d="M5 1v6.5" stroke="#444" stroke-width="0.8"/></svg>
<div class="a" style="left:73.90px;top:708.00px;font-size:7.45px;line-height:7.45px;color:#333;letter-spacing:-0.119px;">Polski</div>
<svg class="a" style="left:979px;top:706px;" width="11" height="11" viewBox="0 0 11 11" fill="none"><path d="M0.5 6.5h10M0.5 8.5h10M0.5 10.5h10" stroke="#444" stroke-width="0.8"/><path d="M3.5 3.5l2-2 2 2" stroke="#444" stroke-width="0.8"/></svg>
<div class="a" style="left:991.80px;top:709.00px;font-size:7.74px;line-height:7.74px;color:#333;letter-spacing:0.106px;">Notatki</div>
<div class="a" style="left:1029.5px;top:705.5px;width:26.5px;height:12.5px;background:#e2e2e2;border-radius:2px"></div>
<svg class="a" style="left:1037.5px;top:707.5px;" width="11" height="9" viewBox="0 0 11 9" fill="none"><rect x="0.5" y="0.5" width="10" height="8" stroke="#444" stroke-width="0.9"/><path d="M2.8 0.5v8M4.5 2.5h4.5v3.5H4.5z" stroke="#444" stroke-width="0.8"/></svg>
<svg class="a" style="left:1064px;top:707.5px;" width="10" height="9" viewBox="0 0 10 9" fill="none"><rect x="0.5" y="0.5" width="3.8" height="3.3" stroke="#444" stroke-width="0.8"/><rect x="5.7" y="0.5" width="3.8" height="3.3" stroke="#444" stroke-width="0.8"/><rect x="0.5" y="5.2" width="3.8" height="3.3" stroke="#444" stroke-width="0.8"/><rect x="5.7" y="5.2" width="3.8" height="3.3" stroke="#444" stroke-width="0.8"/></svg>
<svg class="a" style="left:1091px;top:707px;" width="10" height="10" viewBox="0 0 10 10" fill="none"><path d="M0.5 0.5h4v9h-4zM5.5 0.5h4v9h-4z" stroke="#444" stroke-width="0.8"/><path d="M1.5 3h2M1.5 5h2M6.5 3h2M6.5 5h2" stroke="#444" stroke-width="0.6"/></svg>
<svg class="a" style="left:1118px;top:707px;" width="9" height="10" viewBox="0 0 9 10" fill="none"><rect x="0.5" y="0.5" width="8" height="5.5" stroke="#444" stroke-width="0.8"/><path d="M4.5 6v3.5M2.5 9.5h4" stroke="#444" stroke-width="0.8"/></svg>
<div class="a" style="left:1140px;top:711.5px;width:5px;height:1px;background:#555"></div>
<div class="a" style="left:1148.7px;top:711.6px;width:66.3px;height:0.9px;background:#777"></div>
<div class="a" style="left:1181.8px;top:707px;width:3.4px;height:10px;background:#555;border-radius:1px"></div>
<div class="a" style="left:1219px;top:711.5px;width:5px;height:1px;background:#555"></div>
<div class="a" style="left:1221px;top:709.5px;width:1px;height:5px;background:#555"></div>
<div class="a" style="left:1232.70px;top:709.00px;font-size:7.41px;line-height:7.41px;color:#333;letter-spacing:-0.237px;">113%</div>
<svg class="a" style="left:1258.5px;top:706px;" width="11" height="12" viewBox="0 0 11 12" fill="none"><rect x="3" y="3.5" width="5" height="5" stroke="#333" stroke-width="1"/><path d="M4 1.5l1.5-1 1.5 1M4 10.5l1.5 1 1.5-1M1.5 4.5l-1 1.5 1 1.5M9.5 4.5l1 1.5-1 1.5" stroke="#444" stroke-width="0.8"/></svg>
<div class="a" style="left:221px;top:149px;width:959px;height:540px;background:#fff;box-shadow:0 0 0 0.6px #d4d4d4"></div>
<svg class="a" style="left:221px;top:149px;" width="959" height="540" viewBox="221 149 959 540" fill="none"><circle cx="703" cy="333.5" r="69.5" fill="#f2b32a"/><circle cx="859.3" cy="403.7" r="155" fill="#5a1393"/></svg>
<div class="a" style="left:254.69px;top:176.25px;font-size:42.01px;line-height:42.01px;color:#5a179a;font-weight:bold;transform:scaleX(0.7582);transform-origin:0 0;-webkit-text-stroke:1.3px #5a179a;letter-spacing:1.2px;">Jak usunąć tło ze zdjęcia?</div>
<div class="a" style="left:254.33px;top:222.25px;font-size:39.10px;line-height:39.10px;color:#f1b024;font-weight:bold;transform:scaleX(0.8134);transform-origin:0 0;-webkit-text-stroke:1.3px #f1b024;letter-spacing:1.2px;">Metoda zaawansowana</div>
<svg class="a" style="left:221px;top:149px;" width="959" height="540" viewBox="221 149 959 540" fill="none">
<defs>
 <linearGradient id="cap" x1="0" x2="1" y1="0" y2="0">
  <stop offset="0" stop-color="#c47aa6"/><stop offset="0.06" stop-color="#dcaccb"/><stop offset="0.15" stop-color="#f2dfea"/><stop offset="0.3" stop-color="#efdae6"/>
  <stop offset="0.75" stop-color="#e9cddd"/><stop offset="0.9" stop-color="#dca8c8"/><stop offset="1" stop-color="#c07aa2"/>
 </linearGradient>
 <linearGradient id="metal" x1="0" x2="1" y1="0" y2="0">
  <stop offset="0" stop-color="#b87898"/><stop offset="0.07" stop-color="#d4a4c0"/><stop offset="0.2" stop-color="#f4e0ec"/><stop offset="0.3" stop-color="#e0b8cc"/>
  <stop offset="0.37" stop-color="#5a2040"/><stop offset="0.47" stop-color="#2e0c20"/><stop offset="0.62" stop-color="#3a1028"/><stop offset="0.8" stop-color="#8a4a6c"/><stop offset="0.92" stop-color="#b87a9c"/><stop offset="1" stop-color="#a06484"/>
 </linearGradient>
 <linearGradient id="stem" x1="0" x2="1" y1="0" y2="0">
  <stop offset="0" stop-color="#e8d2e0"/><stop offset="0.15" stop-color="#fbf3f8"/><stop offset="0.33" stop-color="#e4c8d8"/><stop offset="0.35" stop-color="#3e0e28"/><stop offset="0.72" stop-color="#4a1632"/><stop offset="0.8" stop-color="#a45084"/><stop offset="1" stop-color="#b06a94"/>
 </linearGradient>
 <linearGradient id="body" x1="0" x2="1" y1="0" y2="0">
  <stop offset="0" stop-color="#e8dde5"/><stop offset="0.06" stop-color="#fbf6fa"/><stop offset="0.25" stop-color="#f8f2f6"/><stop offset="0.45" stop-color="#ece3ea"/>
  <stop offset="0.62" stop-color="#f0e8ee"/><stop offset="0.85" stop-color="#faf6f9"/><stop offset="1" stop-color="#e6dbe3"/>
 </linearGradient>
 <linearGradient id="bodyv" x1="0" x2="0" y1="0" y2="1">
  <stop offset="0" stop-color="#ffffff" stop-opacity="0.55"/><stop offset="0.12" stop-color="#ffffff" stop-opacity="0.1"/><stop offset="0.5" stop-color="#ffffff" stop-opacity="0.3"/><stop offset="1" stop-color="#ffffff" stop-opacity="0.15"/>
 </linearGradient>
 <linearGradient id="band" x1="0" x2="1" y1="0" y2="0">
  <stop offset="0" stop-color="#a65a9c"/><stop offset="0.12" stop-color="#6a2a5a"/><stop offset="0.32" stop-color="#2a0818"/><stop offset="0.55" stop-color="#3a0a2e"/><stop offset="0.8" stop-color="#7a2a7c"/><stop offset="0.94" stop-color="#a04aa0"/><stop offset="1" stop-color="#b866b0"/>
 </linearGradient>
 <radialGradient id="shadow" cx="0.5" cy="0.5" r="0.5">
  <stop offset="0" stop-color="#ece6ea"/><stop offset="1" stop-color="#ffffff" stop-opacity="0"/>
 </radialGradient>
</defs>
<ellipse cx="811" cy="619" rx="66" ry="6" fill="url(#shadow)" opacity="0.6"/>
<path d="M737 399.5 H886 Q894 399.5 894 408 L893.5 430 Q893 500 891 540 Q889 566 886 575 Q880 600 871 615 Q869 617 865 617 H756 Q752 617 750 614 Q742 600 737 575 Q733 560 732 540 Q729.5 500 729.5 430 L729.5 408 Q729.5 399.5 737 399.5Z" fill="url(#body)"/>
<path d="M737 399.5 H886 Q894 399.5 894 408 L893.5 430 Q893 500 891 540 Q889 566 886 575 Q880 600 871 615 Q869 617 865 617 H756 Q752 617 750 614 Q742 600 737 575 Q733 560 732 540 Q729.5 500 729.5 430 L729.5 408 Q729.5 399.5 737 399.5Z" fill="url(#bodyv)"/>
<rect x="765" y="392" width="93" height="9" fill="#f4eef2"/>
<path d="M766 246 Q766 236.5 776 236.5 H848 Q858 236.5 858 246 V332 H766Z" fill="url(#cap)"/>
<rect x="766" y="331" width="92" height="65" rx="1" fill="url(#metal)"/>
<path d="M766 395.5 H858" stroke="#5a2a44" stroke-width="1.2" opacity="0.6"/>
<path d="M766 332 H858" stroke="#f2e0ea" stroke-width="1.2" opacity="0.8"/>
<rect x="776" y="306" width="70" height="25" fill="url(#metal)" opacity="0.92"/>
<rect x="784" y="254.8" width="54.7" height="51.2" fill="url(#stem)"/>
<circle cx="811" cy="268.6" r="8.5" fill="#6a2c4e" opacity="0.7"/>
<circle cx="811" cy="268.6" r="5.2" fill="#f6e6ee"/><circle cx="811" cy="268.6" r="2.4" fill="#9a5a7e"/>
<path d="M767 240.5 Q812 237 857 240.5" stroke="#f8eef4" stroke-width="3" opacity="0.75" fill="none"/>
<path d="M766.4 396 V246 Q766.4 236.8 776 236.8 H848 Q857.6 236.8 857.6 246 V396" stroke="#b27096" stroke-width="1" fill="none" opacity="0.8"/>
<rect x="759.4" y="458.9" width="110" height="18.3" fill="url(#band)"/>
<g stroke-width="1.6" fill="none" stroke-linejoin="round">
<path stroke="#6a2a52" d="M763.4 432.4 H775.6 Q778.6 432.4 778.6 435.4 V439.8 Q778.6 442.8 775.6 442.8 H763.4 M763.4 442.8 H776 Q779 442.8 779 445.8 V450.2 Q779 453.2 776 453.2 H763.4 V432.4"/>
<path stroke="#3e1230" d="M785.7 453.2 V432.4 H797.9 Q800.9 432.4 800.9 435.4 V439.8 Q800.9 442.8 797.9 442.8 H785.7 M797.9 442.8 Q800.9 442.8 800.9 445.8 V453.2"/>
<path stroke="#3a1028" d="M807.5 453.3 V436.2 Q807.5 432.4 811.3 432.4 H819.4 Q823.2 432.4 823.2 436.2 V453.3 M807.5 443.1 H823.2"/>
<path stroke="#4a1232" d="M830.4 453.3 V436.4 Q830.4 432.4 834.4 432.4 H841.8 Q845.8 432.4 845.8 436.4 V453.3"/>
<path stroke="#7a3a6a" d="M853.2 432.5 H863.7 Q868.7 432.5 868.7 437.5 V448.5 Q868.7 453.3 863.7 453.3 H853.2 Z"/>
</g>
</svg>
<div class="a" style="left:766.70px;top:460.00px;font-size:17.50px;line-height:17.50px;color:#f6cfee;transform:scaleX(0.9179);transform-origin:0 0;">COSMETICS</div>
<div class="a" style="left:762.20px;top:485.00px;font-size:17.80px;line-height:17.80px;color:#66365a;transform:scaleX(1.0420);transform-origin:0 0;-webkit-text-stroke:0;">White Serum</div>
<svg class="a" style="left:221px;top:149px;" width="959" height="540" viewBox="221 149 959 540" fill="none">
<defs>
 <linearGradient id="lg3" x1="0" x2="0" y1="0" y2="1"><stop offset="0" stop-color="#ff9420"/><stop offset="1" stop-color="#ff3cb0"/></linearGradient>
 <linearGradient id="lgo1" x1="0" x2="0" y1="0" y2="1"><stop offset="0" stop-color="#10b4e0"/><stop offset="1" stop-color="#2a84ea"/></linearGradient>
 <linearGradient id="lgo2" x1="0" x2="0" y1="0" y2="1"><stop offset="0" stop-color="#8a5a34"/><stop offset="1" stop-color="#b8309a"/></linearGradient>
 <clipPath id="cp1"><path id="sq1" d="M906 635.5 L929.5 631.5 Q933 631 933 635 V659 Q933 662 930 662.5 L907 663.5 Q903.5 663.5 903.5 660 V639 Q903.5 636 906 635.5Z"/></clipPath>
 <clipPath id="cp3"><path d="M939 633 L963 630 Q966.5 629.5 966.5 633.5 V658.5 Q966.5 661.5 963.5 662 L939.5 663.5 Q936 663.5 936 660 V636.5 Q936 633.5 939 633Z"/></clipPath>
</defs>
<path d="M906 635.5 L929.5 631.5 Q933 631 933 635 V659 Q933 662 930 662.5 L907 663.5 Q903.5 663.5 903.5 660 V639 Q903.5 636 906 635.5Z" fill="#12eee2"/>
<path id="sq2" d="M923 633.5 L946 630.5 Q949.5 630 949.5 634 V658 Q949.5 661 946.5 661.5 L923.5 663 Q920 663 920 659.5 V637 Q920 634 923 633.5Z" fill="#8c98e8"/>
<path d="M939 633 L963 630 Q966.5 629.5 966.5 633.5 V658.5 Q966.5 661.5 963.5 662 L939.5 663.5 Q936 663.5 936 660 V636.5 Q936 633.5 939 633Z" fill="url(#lg3)"/>
<path clip-path="url(#cp1)" d="M923 633.5 L946 630.5 Q949.5 630 949.5 634 V658 Q949.5 661 946.5 661.5 L923.5 663 Q920 663 920 659.5 V637 Q920 634 923 633.5Z" fill="url(#lgo1)"/>
<path clip-path="url(#cp3)" d="M923 633.5 L946 630.5 Q949.5 630 949.5 634 V658 Q949.5 661 946.5 661.5 L923.5 663 Q920 663 920 659.5 V637 Q920 634 923 633.5Z" fill="url(#lgo2)"/>
<rect x="1127.2" y="644.7" width="23.8" height="15.9" rx="3" fill="#a5195e"/>
</svg>
<div class="a" style="left:975.30px;top:632.00px;font-size:13.20px;line-height:13.20px;color:#505050;letter-spacing:5.531px;">TWORZENIE</div>
<div class="a" style="left:976.10px;top:647.00px;font-size:13.20px;line-height:13.20px;color:#505050;letter-spacing:5.567px;">PREZENTACJI</div>
<div class="a" style="left:1131.50px;top:647.00px;font-size:12.20px;line-height:12.20px;color:#fff;transform:scaleX(0.8743);transform-origin:0 0;">.PL</div>
</body></html>
